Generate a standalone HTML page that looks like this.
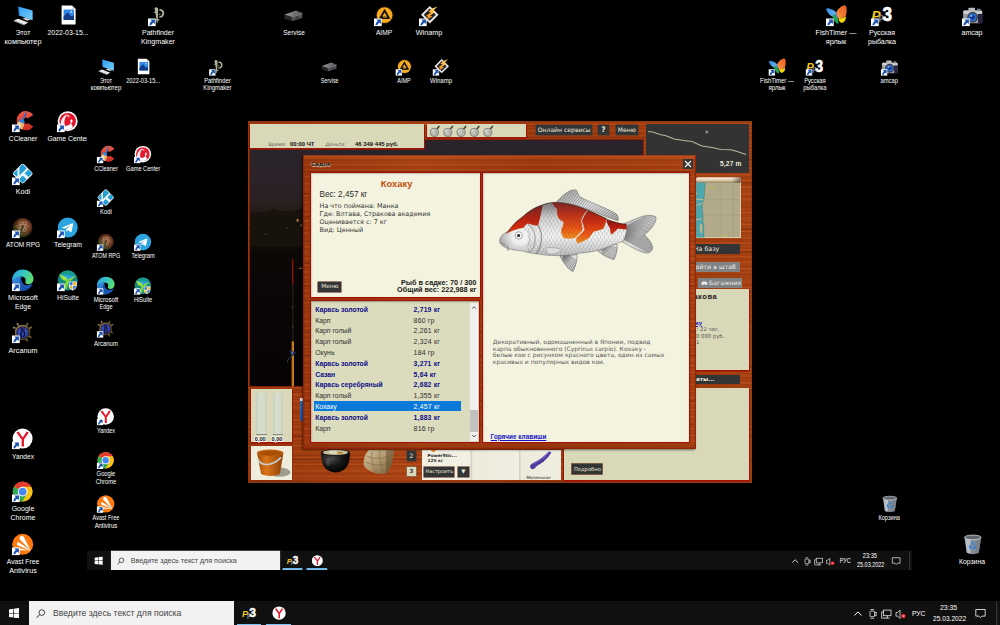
<!DOCTYPE html>
<html lang="ru"><head><meta charset="utf-8"><title>Desktop</title>
<style>
html,body{margin:0;padding:0;background:#000;}
body{width:1000px;height:625px;position:relative;overflow:hidden;font-family:"Liberation Sans",sans-serif;}
.desk{position:absolute;left:0;top:0;width:1000px;height:625px;background:#000;overflow:hidden;}
.inner{position:absolute;left:87.3px;top:54px;width:825px;height:516px;background:#000;overflow:hidden;}
.inner .desk{transform:scale(0.8253,0.8265);transform-origin:0 0;}
.ic{position:absolute;overflow:visible;}
.lb{position:absolute;width:80px;text-align:center;color:#fff;font-size:7.8px;line-height:8.75px;white-space:nowrap;}
.lb span{display:block;transform:scaleX(0.9);transform-origin:50% 50%;}
.tb{position:absolute;left:0;top:600.5px;width:1000px;height:24.5px;background:#101010;}
.win{position:absolute;left:9px;top:7.6px;}
.sb{position:absolute;left:29px;top:0.8px;width:204.6px;height:23.7px;background:#f2f2f2;}
.mg{position:absolute;left:7.2px;top:7.6px;}
.st{position:absolute;left:24px;top:7.1px;font-size:9.2px;line-height:11px;color:#454545;white-space:nowrap;transform:scaleX(0.94);transform-origin:0 50%;}
.tpp{position:absolute;left:241.8px;top:5.4px;}
.tya{position:absolute;left:271.6px;top:5.8px;}
.ul{position:absolute;top:23.2px;height:1.3px;background:#7cc3f5;}
.tray{position:absolute;left:850px;top:0;}
.lang,.tm,.dt{position:absolute;color:#fff;font-size:7.8px;line-height:8px;white-space:nowrap;transform-origin:0 50%;}
.lang{left:912px;top:9px;transform:scaleX(0.86);}
.tm{left:940.4px;top:3.6px;transform:scaleX(0.88);}
.dt{left:932.8px;top:14px;transform:scaleX(0.85);}
/* ---------- game ---------- */
.g{position:absolute;left:0;top:0;width:1000px;height:625px;pointer-events:none;}
.g *{position:absolute;box-sizing:border-box;}
.wood{background-color:#a93e0f;background-image:repeating-linear-gradient(180deg,rgba(70,15,0,0.0) 0px,rgba(70,15,0,0.15) 0.9px,rgba(70,15,0,0.0) 1.9px,rgba(255,140,60,0.10) 3px,rgba(70,15,0,0.0) 4.1px,rgba(60,10,0,0.12) 5.1px,rgba(90,30,5,0) 6.3px),repeating-linear-gradient(180deg,rgba(60,10,0,0) 0px,rgba(60,10,0,.10) 1.3px,rgba(60,10,0,0) 2.4px,rgba(255,150,70,.07) 3.7px),repeating-linear-gradient(180deg,rgba(40,5,0,0) 0px,rgba(40,5,0,0) 15px,rgba(40,5,0,.28) 16px,rgba(40,5,0,0) 17.4px,rgba(40,5,0,0) 23px),linear-gradient(90deg,rgba(0,0,0,.06),rgba(255,170,90,.08) 30%,rgba(0,0,0,.04) 60%,rgba(255,170,90,.06));}
.pn{background:#d9d8b9;box-shadow:0 1.7px 0 #a01607,1px 0.8px 0 #981407,-0.8px 0.8px 0 #8f1207,0 -0.5px 0 #9a3010;}
.pl{background:#f3f3e0;box-shadow:0 0 0 1.2px #a01008, inset 0.5px 0.8px 1.4px rgba(60,60,40,.35);}
.gt{font-family:"DejaVu Sans","Liberation Sans",sans-serif;white-space:nowrap;color:#333;}
.ls{font-family:"Liberation Sans",sans-serif;white-space:nowrap;}
.btn{background:#333435;color:#efeadb;text-align:center;white-space:nowrap;font-family:"DejaVu Sans",sans-serif;box-shadow:0 0 0 0.6px #5a3a2a;}
.btg{background:#808284;color:#f2f2ee;text-align:center;white-space:nowrap;font-family:"DejaVu Sans",sans-serif;}
.row{left:313.6px;width:147.8px;height:10.8px;font-family:"Liberation Sans",sans-serif;font-size:6.9px;line-height:10.8px;color:#2e2e2e;white-space:nowrap;}
.row b{font-weight:700;color:#0d0d86;font-size:6.8px}
.row i{font-style:normal;left:1.6px;top:1.4px}
.row u{text-decoration:none;left:100px;top:1.4px;letter-spacing:0.2px}
.row.sel{background:#0b79d9;color:#fff;}
.inner .ul{top:21.9px;height:2.6px;}

</style></head><body>
<div class="desk" id="d1">
<svg class="ic" style="left:12.00px;top:4.90px" width="21" height="21" viewBox="0 0 21 21"><defs><linearGradient id="pcga0" x1="0" y1="0" x2="1" y2="1"><stop offset="0" stop-color="#2f9bf0"/><stop offset="1" stop-color="#7ad0ff"/></linearGradient></defs>
<polygon points="6.3,1.6 20.6,5.6 20.6,15.2 7,10.6" fill="url(#pcga0)"/>
<polygon points="6.3,1.6 7,1.4 7.6,10.4 7,10.6" fill="#1c6fc0"/>
<polygon points="10.3,13.6 13.6,12.7 18.6,14.6 15.4,15.7" fill="#cfd3d6"/>
<polygon points="1.8,15.6 6.2,13.8 16.2,17.6 12.4,19.8" fill="#e9ebec"/>
<polygon points="1.8,15.6 12.4,19.8 12.4,20.4 1.8,16.2" fill="#aeb2b5"/></svg>
<div class="lb" style="left:-17.50px;top:29.10px"><span style="transform:scaleX(0.862)">Этот</span><span style="transform:scaleX(0.941)">компьютер</span></div>
<svg class="ic" style="left:57.22px;top:4.90px" width="21" height="21" viewBox="0 0 21 21"><path d="M4.6,0.6 H15 L18.6,4 V19.6 H4.6 Z" fill="#ffffff"/><path d="M15,0.6 V4 H18.6 Z" fill="#d4d8dc"/>
<rect x="6.6" y="4.6" width="10.4" height="10.4" fill="#2f86e6"/><polygon points="6.6,15 6.6,11.5 10.5,7.5 14.5,11.6 17,10 17,15" fill="#123d86"/><circle cx="14.4" cy="6.8" r="1" fill="#cfe6ff"/></svg>
<div class="lb" style="left:27.72px;top:29.10px"><span style="transform:scaleX(0.884)">2022-03-15...</span></div>
<svg class="ic" style="left:147.66px;top:4.90px" width="21" height="21" viewBox="0 0 21 21"><g fill="#b3b397"><path d="M8.2,2 L10.2,3.6 L10,9 L9.8,14 L11.4,14.4 L11.4,15.4 L9.8,15.4 L9.8,17.8 L8.6,17.8 L8.6,15.4 L7.6,15.2 L7.8,14.2 L8.4,14 L7.4,8 L5.6,7.6 L7.2,6.6 L6.4,3.6Z"/><path d="M11.2,4.4 C14.4,3.4 16.6,6 16.2,8.8 C15.8,11.4 13.8,13 11.4,12.8 L11.2,11.2 C13,11.4 14.2,10.4 14.4,8.6 C14.6,6.8 13.4,5.6 11.6,6Z"/><path d="M11.4,8.4 C12.4,8.2 12.8,9.4 12,10.2 L11.2,10Z"/></g><rect x="0" y="13.5" width="7.7" height="7.6" fill="#ffffff"/><path d="M2.3,14.5 L6.9,14.5 L6.9,19.1 L5.45,17.65 C4.4,18 3.5,19 3.2,20.3 L1.4,20.3 C1.6,18.2 2.6,16.9 3.8,16Z" fill="#1b52b4"/></svg>
<div class="lb" style="left:118.16px;top:29.10px"><span style="transform:scaleX(0.9)">Pathfinder</span><span style="transform:scaleX(0.912)">Kingmaker</span></div>
<svg class="ic" style="left:283.32px;top:4.90px" width="21" height="21" viewBox="0 0 21 21"><defs><linearGradient id="svta3" x1="0" y1="0" x2="1" y2="0"><stop offset="0" stop-color="#949494"/><stop offset="1" stop-color="#5a5a5a"/></linearGradient></defs><polygon points="1.5,9.5 8.7,11.9 8.7,16.2 1.5,13.8" fill="#262626"/><polygon points="8.7,11.9 19.3,8.1 19.3,12.9 8.7,16.2" fill="#4c4f54"/><polygon points="13.4,10.4 15.4,9.7 15.4,14 13.4,14.7" fill="#3a3c40"/><polygon points="1.5,9.5 13,5.4 19.3,8.1 8.7,11.9" fill="url(#svta3)"/><polygon points="8.7,11.9 19.3,8.1 19.3,8.9 8.7,12.7" fill="#8a8c90"/></svg>
<div class="lb" style="left:253.82px;top:29.10px"><span style="transform:scaleX(0.83)">Servise</span></div>
<svg class="ic" style="left:373.76px;top:4.90px" width="21" height="21" viewBox="0 0 21 21"><circle cx="10.6" cy="10.2" r="9.3" fill="#15100a"/><circle cx="10.6" cy="10.2" r="7.9" fill="#f9ab1c"/><path d="M10.6,3.8 L16.4,13.8 H4.8 Z M10.6,7.4 L8,11.8 H13.2 Z" fill="#111" fill-rule="evenodd"/><path d="M6.4,14 L9,10.8 L15.4,14Z" fill="#111"/><path d="M8.4,12.2 L9.4,11.2 L13.4,13Z" fill="#f9ab1c"/><rect x="0" y="13.5" width="7.7" height="7.6" fill="#ffffff"/><path d="M2.3,14.5 L6.9,14.5 L6.9,19.1 L5.45,17.65 C4.4,18 3.5,19 3.2,20.3 L1.4,20.3 C1.6,18.2 2.6,16.9 3.8,16Z" fill="#1b52b4"/></svg>
<div class="lb" style="left:344.26px;top:29.10px"><span style="transform:scaleX(0.85)">AIMP</span></div>
<svg class="ic" style="left:418.98px;top:4.90px" width="21" height="21" viewBox="0 0 21 21"><defs><linearGradient id="waba5" x1="0" y1="1" x2="1" y2="0"><stop offset="0" stop-color="#f07a10"/><stop offset=".5" stop-color="#ffb22e"/><stop offset="1" stop-color="#ffd870"/></linearGradient></defs><polygon points="10.8,1 19.6,9.7 10.8,18.4 2,9.7" fill="#e9e9ea"/><polygon points="10.8,3.6 16.9,9.7 10.8,15.8 4.7,9.7" fill="#23232a"/><polygon points="18.6,1.4 13.8,6 16.4,6.8 11,10.8 13.6,11.6 5.4,15.6 9.4,11.8 6.8,11 12,7.4 9.2,6.8 13.6,3.2" fill="url(#waba5)"/><rect x="0" y="13.5" width="7.7" height="7.6" fill="#ffffff"/><path d="M2.3,14.5 L6.9,14.5 L6.9,19.1 L5.45,17.65 C4.4,18 3.5,19 3.2,20.3 L1.4,20.3 C1.6,18.2 2.6,16.9 3.8,16Z" fill="#1b52b4"/></svg>
<div class="lb" style="left:389.48px;top:29.10px"><span style="transform:scaleX(0.93)">Winamp</span></div>
<svg class="ic" style="left:825.96px;top:4.90px" width="21" height="21" viewBox="0 0 21 21"><defs><linearGradient id="bfoa6" x1="1" y1="0" x2="0" y2="1"><stop offset="0" stop-color="#ee5a26"/><stop offset=".55" stop-color="#f07a30"/><stop offset="1" stop-color="#f4a848"/></linearGradient><linearGradient id="bfba6" x1="0" y1="0" x2="1" y2="1"><stop offset="0" stop-color="#2f8fe6"/><stop offset="1" stop-color="#7ab8f0"/></linearGradient></defs><path d="M0.2,4.2 C0.4,3.4 1.6,3.2 3,3.4 C6.4,4 8.8,5.6 10.4,7.8 L10.6,12 C8.8,12.6 6.8,12 5.4,11 C3,9.4 1,7 0.2,4.2Z" fill="url(#bfba6)"/><path d="M10.2,7.6 C11.6,4.4 14.4,1.4 17.8,0.4 C19.2,0 20,0.8 20.4,2.4 C21,5.4 20.6,8.6 19.6,11 C17.6,13 14.6,13.8 12.4,13.4 C11,11.8 10.4,9.8 10.2,7.6Z" fill="url(#bfoa6)"/><path d="M12.6,13.2 C15,13.6 17.8,12.8 19.8,11.2 C20,13.2 19.6,15.2 18.4,16.4 C17.2,17.6 15.6,18 14.6,17.4 C13.4,16.6 12.6,15 12.6,13.2Z" fill="#f6d20e"/><path d="M7,9.6 C8.6,9.4 10,10 11,11.4 C12.2,13.4 12.8,16 12.4,18.2 C12.2,18.8 11.6,18.8 11,18.4 C9,17 7.6,14.8 7,12.4 C6.8,11.4 6.8,10.4 7,9.6Z" fill="#1ea654"/><path d="M9.8,7.8 C11,9.4 11.8,11.4 12.2,13.4 C11.4,12.6 10.4,11.6 9.6,10.4 C9.4,9.6 9.6,8.6 9.8,7.8Z" fill="#6e72d8"/><rect x="0" y="13.5" width="7.7" height="7.6" fill="#ffffff"/><path d="M2.3,14.5 L6.9,14.5 L6.9,19.1 L5.45,17.65 C4.4,18 3.5,19 3.2,20.3 L1.4,20.3 C1.6,18.2 2.6,16.9 3.8,16Z" fill="#1b52b4"/></svg>
<div class="lb" style="left:796.46px;top:29.10px"><span style="transform:scaleX(0.925)">FishTimer —</span><span style="transform:scaleX(0.94)">ярлык</span></div>
<svg class="ic" style="left:871.18px;top:4.90px" width="21" height="21" viewBox="0 0 21 21"><text x="0.4" y="15.4" font-family="Liberation Sans, sans-serif" font-style="italic" font-weight="bold" font-size="13.6" fill="#f2c81c" transform="translate(0,0)">P</text><text x="7.6" y="15.4" font-family="Liberation Sans, sans-serif" font-weight="bold" font-size="8.6" fill="#8c8c8c">p</text><text transform="translate(11.4,16.2) scale(0.88,1)" x="0" y="0" font-family="Liberation Sans, sans-serif" font-weight="bold" font-size="19.4" fill="#ffffff" stroke="#ffffff" stroke-width="0.7">3</text><rect x="0" y="13.5" width="7.7" height="7.6" fill="#ffffff"/><path d="M2.3,14.5 L6.9,14.5 L6.9,19.1 L5.45,17.65 C4.4,18 3.5,19 3.2,20.3 L1.4,20.3 C1.6,18.2 2.6,16.9 3.8,16Z" fill="#1b52b4"/></svg>
<div class="lb" style="left:841.68px;top:29.10px"><span style="transform:scaleX(0.898)">Русская</span><span style="transform:scaleX(0.902)">рыбалка</span></div>
<svg class="ic" style="left:961.62px;top:4.90px" width="21" height="21" viewBox="0 0 21 21"><rect x="1.2" y="5.6" width="19" height="12.6" rx="1.6" fill="#9a9da2"/><rect x="1.2" y="5.6" width="19" height="3.4" rx="1.4" fill="#c9ccd0"/><rect x="6.4" y="2.8" width="6.6" height="3.6" rx="0.8" fill="#b8bbbf"/><rect x="15" y="3.8" width="3.6" height="2.2" fill="#7d8085"/><rect x="16" y="9" width="4.4" height="9.2" fill="#2a2340"/><circle cx="10.6" cy="12.2" r="5.4" fill="#3c3f46"/><circle cx="10.6" cy="12.2" r="4" fill="#2c6fd0"/><circle cx="10.6" cy="12.2" r="2.2" fill="#123a86"/><circle cx="9.4" cy="10.8" r="0.9" fill="#a8d0ff"/><rect x="0" y="13.5" width="7.7" height="7.6" fill="#ffffff"/><path d="M2.3,14.5 L6.9,14.5 L6.9,19.1 L5.45,17.65 C4.4,18 3.5,19 3.2,20.3 L1.4,20.3 C1.6,18.2 2.6,16.9 3.8,16Z" fill="#1b52b4"/></svg>
<div class="lb" style="left:932.12px;top:29.10px"><span style="transform:scaleX(0.897)">amcap</span></div>
<svg class="ic" style="left:12.00px;top:110.76px" width="21" height="21" viewBox="0 0 21 21"><defs><linearGradient id="ccga9" x1="0" y1="0" x2="0" y2="1"><stop offset="0" stop-color="#ee5a44"/><stop offset="1" stop-color="#cc2a1e"/></linearGradient></defs><path d="M21.2,4 A9.2,9.6 0 1 0 21.2,15.4 L16,12.2 A3,3 0 1 1 16,7.2 Z" fill="url(#ccga9)"/><path d="M13.4,1.2 L14.8,1.8 L11.6,9 L10.2,8.4Z" fill="#1d72d4"/><path d="M7.6,8.6 C9.4,7.6 12.2,8.8 12.8,10.8 L11.6,12.8 L6.6,10.4Z" fill="#2a84e4"/><path d="M6.6,10.4 L11.8,12.8 C12,14.6 11,17 10,18.4 C8.4,17.8 6.8,16.4 5.4,15 C4.6,13.6 5.2,11.6 6.6,10.4Z" fill="#f2cf98"/><path d="M9,11.6 L11.8,12.8 C12,14.6 11,17 10,18.4 C9.4,18.2 8.8,17.8 8.2,17.4 C9.2,15.6 9.4,13.4 9,11.6Z" fill="#e4b06a"/><rect x="0" y="13.5" width="7.7" height="7.6" fill="#ffffff"/><path d="M2.3,14.5 L6.9,14.5 L6.9,19.1 L5.45,17.65 C4.4,18 3.5,19 3.2,20.3 L1.4,20.3 C1.6,18.2 2.6,16.9 3.8,16Z" fill="#1b52b4"/></svg>
<div class="lb" style="left:-17.50px;top:134.96px"><span style="transform:scaleX(0.865)">CCleaner</span></div>
<svg class="ic" style="left:57.22px;top:110.76px" width="21" height="21" viewBox="0 0 21 21"><circle cx="10.7" cy="10.2" r="10" fill="#ffffff"/><circle cx="10.7" cy="10.2" r="8.3" fill="#e3162c"/><path d="M3.6,13.4 C3.6,8.4 6.4,4.6 10.8,3 C8.6,5.4 7.4,8.4 7.4,11.4 C7.4,13 7.8,14.2 8.4,15.2 L5.4,16 C4.4,15.2 3.8,14.4 3.6,13.4Z" fill="#fff" opacity=".92"/><path d="M8,15.2 L12.4,13.8 L13.6,12 L14.6,13.4 L16,16 C13.6,18.8 8.6,19.6 5.4,16.4Z" fill="#fff"/><path d="M10.4,4 L12.6,4.8 L12.2,6.4 L11.4,5.6 L10.6,6.2Z" fill="#fff"/><path d="M14.4,8 L16.2,10.6 L15,10.6 L14.6,12.6 L13.4,12.2 L13.8,10.4 L12.8,10.2Z" fill="#fff"/><rect x="0" y="13.5" width="7.7" height="7.6" fill="#ffffff"/><path d="M2.3,14.5 L6.9,14.5 L6.9,19.1 L5.45,17.65 C4.4,18 3.5,19 3.2,20.3 L1.4,20.3 C1.6,18.2 2.6,16.9 3.8,16Z" fill="#1b52b4"/></svg>
<div class="lb" style="left:27.72px;top:134.96px"><span style="transform:scaleX(0.88)">Game Center</span></div>
<svg class="ic" style="left:12.00px;top:163.69px" width="21" height="21" viewBox="0 0 21 21"><g transform="translate(10.7,9.6) scale(1.04) translate(-10.7,-10.2)"><g transform="rotate(45 10.7 10.2)"><rect x="3.5" y="3" width="14.4" height="14.4" rx="1.8" fill="#f4f8fb"/></g><g fill="#219fd6"><polygon points="1.6,10.1 5.7,6 5.7,13.4"/><polygon points="10.5,1 14.6,5.1 7.5,12.2 7.5,4"/><polygon points="16.2,6.2 19.8,9.8 16.2,13.4 12.6,9.8"/><polygon points="10.8,12 14.4,15.6 10.6,19.4 7.4,16.2 7.4,15.4"/></g></g><rect x="0" y="13.5" width="7.7" height="7.6" fill="#ffffff"/><path d="M2.3,14.5 L6.9,14.5 L6.9,19.1 L5.45,17.65 C4.4,18 3.5,19 3.2,20.3 L1.4,20.3 C1.6,18.2 2.6,16.9 3.8,16Z" fill="#1b52b4"/></svg>
<div class="lb" style="left:-17.50px;top:187.89px"><span style="transform:scaleX(0.92)">Kodi</span></div>
<svg class="ic" style="left:12.00px;top:216.62px" width="21" height="21" viewBox="0 0 21 21"><defs><linearGradient id="atga12" x1="0.9" y1="0" x2="0.1" y2="1"><stop offset="0" stop-color="#a0583a"/><stop offset="0.45" stop-color="#6e3a24"/><stop offset="0.75" stop-color="#4a4a1e"/><stop offset="1" stop-color="#26300e"/></linearGradient><radialGradient id="atsa12" cx=".5" cy=".5" r=".5"><stop offset=".7" stop-color="#000" stop-opacity="0"/><stop offset="1" stop-color="#000" stop-opacity=".55"/></radialGradient></defs><circle cx="10.6" cy="10.6" r="9.7" fill="url(#atga12)"/><g fill="none" stroke="#b89a78" stroke-width="1" opacity=".75"><ellipse cx="10.8" cy="9.6" rx="5.2" ry="2.1"/><ellipse cx="10.8" cy="9.6" rx="5.2" ry="2.1" transform="rotate(60 10.8 9.6)"/><ellipse cx="10.8" cy="9.6" rx="5.2" ry="2.1" transform="rotate(120 10.8 9.6)"/></g><path d="M8.6,12.4 C9.6,10.4 10.6,9.4 11.6,8.4 C11.4,10.4 10.8,13 9.6,15.4Z" fill="#2a3a14" opacity=".8"/><circle cx="10.6" cy="10.6" r="9.7" fill="url(#atsa12)"/><rect x="0" y="13.5" width="7.7" height="7.6" fill="#ffffff"/><path d="M2.3,14.5 L6.9,14.5 L6.9,19.1 L5.45,17.65 C4.4,18 3.5,19 3.2,20.3 L1.4,20.3 C1.6,18.2 2.6,16.9 3.8,16Z" fill="#1b52b4"/></svg>
<div class="lb" style="left:-17.50px;top:240.82px"><span style="transform:scaleX(0.835)">ATOM RPG</span></div>
<svg class="ic" style="left:57.22px;top:216.62px" width="21" height="21" viewBox="0 0 21 21"><circle cx="10.8" cy="10.6" r="10" fill="#2aa3df"/><g transform="translate(10.6,10.4) scale(.86) translate(-10.6,-10.4)"><path d="M4.4,10.4 L16.2,5.6 C16.8,5.4 17.2,5.8 17,6.6 L15.2,15.4 C15,16 14.6,16.2 14,15.8 L11,13.6 L9.4,15.2 C9.2,15.4 8.9,15.3 8.9,15 L9.1,12.4 L14.4,7.6 L7.8,11.8 L4.6,11 C4.1,10.9 4,10.6 4.4,10.4Z" fill="#fff"/></g><rect x="0" y="13.5" width="7.7" height="7.6" fill="#ffffff"/><path d="M2.3,14.5 L6.9,14.5 L6.9,19.1 L5.45,17.65 C4.4,18 3.5,19 3.2,20.3 L1.4,20.3 C1.6,18.2 2.6,16.9 3.8,16Z" fill="#1b52b4"/></svg>
<div class="lb" style="left:27.72px;top:240.82px"><span style="transform:scaleX(0.873)">Telegram</span></div>
<svg class="ic" style="left:12.00px;top:269.55px" width="21" height="21" viewBox="0 0 21 21"><defs><linearGradient id="edga14" x1="0" y1="0.2" x2="1" y2="0.6"><stop offset="0" stop-color="#2c9fe8"/><stop offset="0.45" stop-color="#35c4c4"/><stop offset="1" stop-color="#5fe06a"/></linearGradient><linearGradient id="edba14" x1="0" y1="0" x2="0.6" y2="1"><stop offset="0" stop-color="#3a9ae8"/><stop offset="1" stop-color="#1650b0"/></linearGradient></defs><g transform="translate(10.7,10.2) scale(1.09) translate(-10.7,-10.7)">
<path d="M1,11.6 C0.4,5 5.2,0.8 10.8,0.8 C16.6,0.8 20.6,4.8 20.6,9.6 C20.6,12.6 18.4,14.4 16,14.4 C13.6,14.4 12.6,13.2 13.2,12 C14,10.4 13.2,7.6 9.8,7.4 C5.6,7.2 2.2,10 1,11.6Z" fill="url(#edga14)"/>
<path d="M1,11.6 C1.2,16.8 5.4,20.6 10.4,20.6 C13,20.6 15.6,19.6 17.4,17.6 C14,19 9.6,17.8 8.4,14.2 C7.6,11.6 8.6,9 9.8,7.4 C5.4,7.2 2,9.8 1,11.6Z" fill="url(#edba14)"/>
<path d="M8.4,14.2 C9.6,17.8 14,19 17.4,17.6 C18.6,16.4 19.4,15 19.8,13.6 C17,16 12.4,16.2 10.4,13 C9.2,11 9.2,9 9.8,7.4 C8.6,9 7.6,11.6 8.4,14.2Z" fill="#1a5cbc"/></g><rect x="0" y="13.5" width="7.7" height="7.6" fill="#ffffff"/><path d="M2.3,14.5 L6.9,14.5 L6.9,19.1 L5.45,17.65 C4.4,18 3.5,19 3.2,20.3 L1.4,20.3 C1.6,18.2 2.6,16.9 3.8,16Z" fill="#1b52b4"/></svg>
<div class="lb" style="left:-17.50px;top:293.75px"><span style="transform:scaleX(0.94)">Microsoft</span><span style="transform:scaleX(0.87)">Edge</span></div>
<svg class="ic" style="left:57.22px;top:269.55px" width="21" height="21" viewBox="0 0 21 21"><circle cx="10.7" cy="10.6" r="10" fill="#14897e"/><path d="M3,4 A10,10 0 0 1 18.6,4.4 L10.6,10.6Z" fill="#1a9a8c"/><polygon points="3.4,4.6 19,6 10.8,10.6" fill="#27a4e6"/><polygon points="2,4 9.4,7.4 11.2,10.8 6.6,10.4" fill="#a6e83a"/><polygon points="2,4 6.6,10.4 4.6,8.6" fill="#c8f45a"/><polygon points="19.6,5.6 13.6,10.8 10.4,10.8 12.6,8.4" fill="#8fdc34"/><polygon points="8.6,9.6 12.2,10.6 9.6,19.8 7.2,17.4" fill="#7ad830"/><polygon points="8.6,10 7.2,17.4 3.8,17.2 6.6,13.2" fill="#0f6f68"/><path d="M11.8,11.4 H19.8 V15.4 C19.8,18 17.8,19.6 15.8,20.4 C13.8,19.6 11.8,18 11.8,15.4Z" fill="#ffffff"/><rect x="12.5" y="12.1" width="3" height="3.2" fill="#2a7ae0"/><rect x="16.1" y="12.1" width="3" height="3.2" fill="#f5b21c"/><path d="M12.5,15.9 H15.5 V19.5 C13.9,18.8 12.5,17.6 12.5,16Z" fill="#f5b21c"/><path d="M16.1,15.9 H19.1 V16 C19.1,17.6 17.7,18.8 16.1,19.5Z" fill="#2a7ae0"/><rect x="0" y="13.5" width="7.7" height="7.6" fill="#ffffff"/><path d="M2.3,14.5 L6.9,14.5 L6.9,19.1 L5.45,17.65 C4.4,18 3.5,19 3.2,20.3 L1.4,20.3 C1.6,18.2 2.6,16.9 3.8,16Z" fill="#1b52b4"/></svg>
<div class="lb" style="left:27.72px;top:293.75px"><span style="transform:scaleX(0.871)">HiSuite</span></div>
<svg class="ic" style="left:12.00px;top:322.48px" width="21" height="21" viewBox="0 0 21 21"><defs><linearGradient id="arga16" x1="0" y1="0" x2="1" y2="1"><stop offset="0" stop-color="#9a845a"/><stop offset=".5" stop-color="#6a5636"/><stop offset="1" stop-color="#2a2010"/></linearGradient></defs><g stroke="url(#arga16)" stroke-width="2" stroke-linecap="round"><line x1="18.00" y1="10.60" x2="20.60" y2="10.60"/><line x1="17.01" y1="14.30" x2="19.26" y2="15.60"/><line x1="14.30" y1="17.01" x2="15.60" y2="19.26"/><line x1="10.60" y1="18.00" x2="10.60" y2="20.60"/><line x1="6.90" y1="17.01" x2="5.60" y2="19.26"/><line x1="4.19" y1="14.30" x2="1.94" y2="15.60"/><line x1="3.20" y1="10.60" x2="0.60" y2="10.60"/><line x1="4.19" y1="6.90" x2="1.94" y2="5.60"/><line x1="6.90" y1="4.19" x2="5.60" y2="1.94"/><line x1="10.60" y1="3.20" x2="10.60" y2="0.60"/><line x1="14.30" y1="4.19" x2="15.60" y2="1.94"/><line x1="17.01" y1="6.90" x2="19.26" y2="5.60"/></g><circle cx="10.6" cy="10.6" r="7.8" fill="url(#arga16)"/><circle cx="10.6" cy="10.6" r="6.2" fill="#161428"/><circle cx="10.6" cy="10.6" r="5.4" fill="#3448bc"/><circle cx="12" cy="8.4" r="2" fill="#5a6ae0" opacity=".7"/><path d="M9.2,6 C10.6,7.6 10.4,9.6 9.4,10.8 C8.6,12 9,14 10,15.4 M12.2,6.4 C11.4,8 11.8,9.6 12.4,11 C13,12.4 12.4,14 11.6,15.2" fill="none" stroke="#10102c" stroke-width="1.5"/><rect x="0" y="13.5" width="7.7" height="7.6" fill="#ffffff"/><path d="M2.3,14.5 L6.9,14.5 L6.9,19.1 L5.45,17.65 C4.4,18 3.5,19 3.2,20.3 L1.4,20.3 C1.6,18.2 2.6,16.9 3.8,16Z" fill="#1b52b4"/></svg>
<div class="lb" style="left:-17.50px;top:346.68px"><span style="transform:scaleX(0.925)">Arcanum</span></div>
<svg class="ic" style="left:12.00px;top:428.34px" width="21" height="21" viewBox="0 0 21 21"><circle cx="10.6" cy="10.6" r="10" fill="#ffffff"/><path d="M4.4,4.4 L6.6,3.4 L10.8,9.4 L14.6,3.4 L16.8,4.4 L12,11.6 L12,18.4 L9.6,18.4 L9.6,11.6Z" fill="#e8192c"/><rect x="0" y="13.5" width="7.7" height="7.6" fill="#ffffff"/><path d="M2.3,14.5 L6.9,14.5 L6.9,19.1 L5.45,17.65 C4.4,18 3.5,19 3.2,20.3 L1.4,20.3 C1.6,18.2 2.6,16.9 3.8,16Z" fill="#1b52b4"/></svg>
<div class="lb" style="left:-17.50px;top:452.54px"><span style="transform:scaleX(0.845)">Yandex</span></div>
<svg class="ic" style="left:12.00px;top:481.27px" width="21" height="21" viewBox="0 0 21 21"><circle cx="10.6" cy="10.6" r="9.8" fill="#fbc116"/><path d="M10.6,10.6 L2.1,5.7 A9.8,9.8 0 0 1 19.1,5.7 Z" fill="#e33b2e"/><path d="M10.6,0.8 A9.8,9.8 0 0 1 19.1,5.7 L10.6,5.7Z" fill="#e33b2e"/><path d="M10.6,10.6 L2.1,5.7 A9.8,9.8 0 0 0 10.6,20.4 L14.9,13.1Z" fill="#2da94f"/><path d="M19.1,5.7 A9.8,9.8 0 0 1 10.6,20.4 L14.9,13.1 Z" fill="#fbc116"/><path d="M10.6,5.7 L19.1,5.7 L14.9,13.1Z" fill="#fbc116"/><circle cx="10.6" cy="10.6" r="4.9" fill="#ffffff"/><circle cx="10.6" cy="10.6" r="3.9" fill="#4688f1"/><rect x="0" y="13.5" width="7.7" height="7.6" fill="#ffffff"/><path d="M2.3,14.5 L6.9,14.5 L6.9,19.1 L5.45,17.65 C4.4,18 3.5,19 3.2,20.3 L1.4,20.3 C1.6,18.2 2.6,16.9 3.8,16Z" fill="#1b52b4"/></svg>
<div class="lb" style="left:-17.50px;top:505.47px"><span style="transform:scaleX(0.902)">Google</span><span style="transform:scaleX(0.898)">Chrome</span></div>
<svg class="ic" style="left:12.00px;top:534.20px" width="21" height="21" viewBox="0 0 21 21"><circle cx="10.7" cy="10.3" r="10.5" fill="#ff7a0e"/><path d="M18.8,16.6 L11.76,2.95 A2.3,2.3 0 1 0 8.04,5.65Z M18.8,16.6 L7.26,8.59 A1.6,1.6 0 1 0 5.74,11.41Z M18.8,16.6 L3.74,13.61 A1.2,1.2 0 1 0 3.46,15.99Z" fill="#fff"/><rect x="0" y="13.5" width="7.7" height="7.6" fill="#ffffff"/><path d="M2.3,14.5 L6.9,14.5 L6.9,19.1 L5.45,17.65 C4.4,18 3.5,19 3.2,20.3 L1.4,20.3 C1.6,18.2 2.6,16.9 3.8,16Z" fill="#1b52b4"/></svg>
<div class="lb" style="left:-17.50px;top:558.40px"><span style="transform:scaleX(0.865)">Avast Free</span><span style="transform:scaleX(0.92)">Antivirus</span></div>
<svg class="ic" style="left:961.62px;top:534.20px" width="21" height="21" viewBox="0 0 21 21"><path d="M2.4,3.4 L19.2,3.4 L16.8,18.8 C13,20.6 8.6,20.6 4.8,18.8Z" fill="#9097a0" opacity="0.92"/><path d="M3.2,4.6 L8.6,5.6 L8.4,19.6 C7,19.4 5.8,19.2 4.8,18.8Z" fill="#c9cfd6" opacity="0.75"/><path d="M13.6,5.6 L18.8,4.6 L16.8,18.8 C15.8,19.2 14.8,19.4 13.6,19.6Z" fill="#777e87" opacity="0.8"/><ellipse cx="10.8" cy="3.4" rx="8.4" ry="2.3" fill="#5f666e" stroke="#cfd4d9" stroke-width="0.8"/><g fill="#1f86ee"><path d="M9.6,8.6 L11.6,8.2 L13,10.6 L11.8,11.2 L10.8,9.6 L9.8,10.2Z"/><path d="M13.4,11.4 L14.2,13.4 L12.4,15 L10.8,15 L10.8,13.6 L12.2,13.6 L12.4,12.4Z"/><path d="M9.6,15 L7.6,14.6 L7,12.4 L8.2,10.6 L9.2,11.4 L8.4,12.6 L9.4,13.4Z"/></g></svg>
<div class="lb" style="left:932.12px;top:558.40px"><span style="transform:scaleX(0.875)">Корзина</span></div>
<div class="tb">
<svg class="win" viewBox="0 0 10 10" width="10.4" height="10.4"><path d="M0,1.4 L4.2,0.8 V4.7 H0Z M4.8,0.7 L10,0 V4.7 H4.8Z M0,5.3 H4.2 V9.2 L0,8.6Z M4.8,5.3 H10 V10 L4.8,9.3Z" fill="#fff"/></svg>
<div class="sb"><svg class="mg" viewBox="0 0 10 10" width="9.4" height="9.4"><circle cx="6.2" cy="3.8" r="3" fill="none" stroke="#222" stroke-width="0.9"/><path d="M4,6 L0.6,9.4" stroke="#222" stroke-width="1"/></svg><span class="st">Введите здесь текст для поиска</span></div>
<svg class="tpp" width="16" height="14" viewBox="0 0 16 14"><text x="0" y="10.8" font-family="Liberation Sans, sans-serif" font-style="italic" font-weight="bold" font-size="9.4" fill="#f2c81c">P</text><text x="5" y="11" font-family="Liberation Sans, sans-serif" font-weight="bold" font-size="6.4" fill="#8a8a8a">p</text><text transform="translate(7.2,11.4) scale(.92,1)" x="0" y="0" font-family="Liberation Sans, sans-serif" font-weight="bold" font-size="13.2" fill="#ffffff" stroke="#ffffff" stroke-width="0.5">3</text></svg>
<svg class="tya" width="14" height="14" viewBox="0 0 21 21"><circle cx="10.6" cy="10.6" r="10" fill="#ffffff"/><path d="M4.4,4.4 L6.6,3.4 L10.8,9.4 L14.6,3.4 L16.8,4.4 L12,11.6 L12,18.4 L9.6,18.4 L9.6,11.6Z" fill="#e8192c"/></svg>
<div class="ul" style="left:237.2px;width:24px"></div><div class="ul" style="left:266.4px;width:24.2px"></div>
<svg class="tray" width="150" height="24.5" viewBox="850 600.5 150 24.5">
<path d="M854.4,615 L858,611.4 L861.6,615" fill="none" stroke="#fff" stroke-width="1"/>
<g fill="none" stroke="#e8e8e8" stroke-width="0.8"><rect x="870" y="610.6" width="4.6" height="5.6" rx="0.6"/><path d="M874.6,612.4 L876.2,611.6 V615.4 L874.6,614.6"/><path d="M870.6,609 H874 M870.6,617.8 H874"/></g>
<g fill="none" stroke="#e8e8e8" stroke-width="0.8"><rect x="883.6" y="609.6" width="7.4" height="5.6"/><path d="M881.6,611.4 H883.6 M881.6,611.4 V617.6 H886.6 M885.6,617.6 H889.6 M887.4,615.2 V617.4"/></g>
<g fill="none" stroke="#e8e8e8" stroke-width="0.8"><path d="M896,612 H897.6 L900,609.6 V618 L897.6,615.6 H896Z"/></g><circle cx="903.4" cy="615.6" r="2.3" fill="#e81123"/><path d="M902.4,614.6 L904.4,616.6 M904.4,614.6 L902.4,616.6" stroke="#fff" stroke-width="0.6"/>
<g fill="none" stroke="#f0f0f0" stroke-width="0.85"><path d="M975.8,609 H985.2 V615.6 H982 L980.5,617.2 L979,615.6 H975.8Z"/></g>
<rect x="996.6" y="601" width="0.5" height="24" fill="#6a6a6a"/>
</svg>
<span class="lang">РУС</span><span class="tm">23:35</span><span class="dt">25.03.2022</span>
</div>
</div>
<div class="inner"><div class="desk" id="d2">
<svg class="ic" style="left:12.00px;top:4.90px" width="21" height="21" viewBox="0 0 21 21"><defs><linearGradient id="pcgb0" x1="0" y1="0" x2="1" y2="1"><stop offset="0" stop-color="#2f9bf0"/><stop offset="1" stop-color="#7ad0ff"/></linearGradient></defs>
<polygon points="6.3,1.6 20.6,5.6 20.6,15.2 7,10.6" fill="url(#pcgb0)"/>
<polygon points="6.3,1.6 7,1.4 7.6,10.4 7,10.6" fill="#1c6fc0"/>
<polygon points="10.3,13.6 13.6,12.7 18.6,14.6 15.4,15.7" fill="#cfd3d6"/>
<polygon points="1.8,15.6 6.2,13.8 16.2,17.6 12.4,19.8" fill="#e9ebec"/>
<polygon points="1.8,15.6 12.4,19.8 12.4,20.4 1.8,16.2" fill="#aeb2b5"/></svg>
<div class="lb" style="left:-17.50px;top:29.10px"><span style="transform:scaleX(0.862)">Этот</span><span style="transform:scaleX(0.941)">компьютер</span></div>
<svg class="ic" style="left:57.22px;top:4.90px" width="21" height="21" viewBox="0 0 21 21"><path d="M4.6,0.6 H15 L18.6,4 V19.6 H4.6 Z" fill="#ffffff"/><path d="M15,0.6 V4 H18.6 Z" fill="#d4d8dc"/>
<rect x="6.6" y="4.6" width="10.4" height="10.4" fill="#2f86e6"/><polygon points="6.6,15 6.6,11.5 10.5,7.5 14.5,11.6 17,10 17,15" fill="#123d86"/><circle cx="14.4" cy="6.8" r="1" fill="#cfe6ff"/></svg>
<div class="lb" style="left:27.72px;top:29.10px"><span style="transform:scaleX(0.884)">2022-03-15...</span></div>
<svg class="ic" style="left:147.66px;top:4.90px" width="21" height="21" viewBox="0 0 21 21"><g fill="#b3b397"><path d="M8.2,2 L10.2,3.6 L10,9 L9.8,14 L11.4,14.4 L11.4,15.4 L9.8,15.4 L9.8,17.8 L8.6,17.8 L8.6,15.4 L7.6,15.2 L7.8,14.2 L8.4,14 L7.4,8 L5.6,7.6 L7.2,6.6 L6.4,3.6Z"/><path d="M11.2,4.4 C14.4,3.4 16.6,6 16.2,8.8 C15.8,11.4 13.8,13 11.4,12.8 L11.2,11.2 C13,11.4 14.2,10.4 14.4,8.6 C14.6,6.8 13.4,5.6 11.6,6Z"/><path d="M11.4,8.4 C12.4,8.2 12.8,9.4 12,10.2 L11.2,10Z"/></g><rect x="0" y="13.5" width="7.7" height="7.6" fill="#ffffff"/><path d="M2.3,14.5 L6.9,14.5 L6.9,19.1 L5.45,17.65 C4.4,18 3.5,19 3.2,20.3 L1.4,20.3 C1.6,18.2 2.6,16.9 3.8,16Z" fill="#1b52b4"/></svg>
<div class="lb" style="left:118.16px;top:29.10px"><span style="transform:scaleX(0.9)">Pathfinder</span><span style="transform:scaleX(0.912)">Kingmaker</span></div>
<svg class="ic" style="left:283.32px;top:4.90px" width="21" height="21" viewBox="0 0 21 21"><defs><linearGradient id="svtb3" x1="0" y1="0" x2="1" y2="0"><stop offset="0" stop-color="#949494"/><stop offset="1" stop-color="#5a5a5a"/></linearGradient></defs><polygon points="1.5,9.5 8.7,11.9 8.7,16.2 1.5,13.8" fill="#262626"/><polygon points="8.7,11.9 19.3,8.1 19.3,12.9 8.7,16.2" fill="#4c4f54"/><polygon points="13.4,10.4 15.4,9.7 15.4,14 13.4,14.7" fill="#3a3c40"/><polygon points="1.5,9.5 13,5.4 19.3,8.1 8.7,11.9" fill="url(#svtb3)"/><polygon points="8.7,11.9 19.3,8.1 19.3,8.9 8.7,12.7" fill="#8a8c90"/></svg>
<div class="lb" style="left:253.82px;top:29.10px"><span style="transform:scaleX(0.83)">Servise</span></div>
<svg class="ic" style="left:373.76px;top:4.90px" width="21" height="21" viewBox="0 0 21 21"><circle cx="10.6" cy="10.2" r="9.3" fill="#15100a"/><circle cx="10.6" cy="10.2" r="7.9" fill="#f9ab1c"/><path d="M10.6,3.8 L16.4,13.8 H4.8 Z M10.6,7.4 L8,11.8 H13.2 Z" fill="#111" fill-rule="evenodd"/><path d="M6.4,14 L9,10.8 L15.4,14Z" fill="#111"/><path d="M8.4,12.2 L9.4,11.2 L13.4,13Z" fill="#f9ab1c"/><rect x="0" y="13.5" width="7.7" height="7.6" fill="#ffffff"/><path d="M2.3,14.5 L6.9,14.5 L6.9,19.1 L5.45,17.65 C4.4,18 3.5,19 3.2,20.3 L1.4,20.3 C1.6,18.2 2.6,16.9 3.8,16Z" fill="#1b52b4"/></svg>
<div class="lb" style="left:344.26px;top:29.10px"><span style="transform:scaleX(0.85)">AIMP</span></div>
<svg class="ic" style="left:418.98px;top:4.90px" width="21" height="21" viewBox="0 0 21 21"><defs><linearGradient id="wabb5" x1="0" y1="1" x2="1" y2="0"><stop offset="0" stop-color="#f07a10"/><stop offset=".5" stop-color="#ffb22e"/><stop offset="1" stop-color="#ffd870"/></linearGradient></defs><polygon points="10.8,1 19.6,9.7 10.8,18.4 2,9.7" fill="#e9e9ea"/><polygon points="10.8,3.6 16.9,9.7 10.8,15.8 4.7,9.7" fill="#23232a"/><polygon points="18.6,1.4 13.8,6 16.4,6.8 11,10.8 13.6,11.6 5.4,15.6 9.4,11.8 6.8,11 12,7.4 9.2,6.8 13.6,3.2" fill="url(#wabb5)"/><rect x="0" y="13.5" width="7.7" height="7.6" fill="#ffffff"/><path d="M2.3,14.5 L6.9,14.5 L6.9,19.1 L5.45,17.65 C4.4,18 3.5,19 3.2,20.3 L1.4,20.3 C1.6,18.2 2.6,16.9 3.8,16Z" fill="#1b52b4"/></svg>
<div class="lb" style="left:389.48px;top:29.10px"><span style="transform:scaleX(0.93)">Winamp</span></div>
<svg class="ic" style="left:825.96px;top:4.90px" width="21" height="21" viewBox="0 0 21 21"><defs><linearGradient id="bfob6" x1="1" y1="0" x2="0" y2="1"><stop offset="0" stop-color="#ee5a26"/><stop offset=".55" stop-color="#f07a30"/><stop offset="1" stop-color="#f4a848"/></linearGradient><linearGradient id="bfbb6" x1="0" y1="0" x2="1" y2="1"><stop offset="0" stop-color="#2f8fe6"/><stop offset="1" stop-color="#7ab8f0"/></linearGradient></defs><path d="M0.2,4.2 C0.4,3.4 1.6,3.2 3,3.4 C6.4,4 8.8,5.6 10.4,7.8 L10.6,12 C8.8,12.6 6.8,12 5.4,11 C3,9.4 1,7 0.2,4.2Z" fill="url(#bfbb6)"/><path d="M10.2,7.6 C11.6,4.4 14.4,1.4 17.8,0.4 C19.2,0 20,0.8 20.4,2.4 C21,5.4 20.6,8.6 19.6,11 C17.6,13 14.6,13.8 12.4,13.4 C11,11.8 10.4,9.8 10.2,7.6Z" fill="url(#bfob6)"/><path d="M12.6,13.2 C15,13.6 17.8,12.8 19.8,11.2 C20,13.2 19.6,15.2 18.4,16.4 C17.2,17.6 15.6,18 14.6,17.4 C13.4,16.6 12.6,15 12.6,13.2Z" fill="#f6d20e"/><path d="M7,9.6 C8.6,9.4 10,10 11,11.4 C12.2,13.4 12.8,16 12.4,18.2 C12.2,18.8 11.6,18.8 11,18.4 C9,17 7.6,14.8 7,12.4 C6.8,11.4 6.8,10.4 7,9.6Z" fill="#1ea654"/><path d="M9.8,7.8 C11,9.4 11.8,11.4 12.2,13.4 C11.4,12.6 10.4,11.6 9.6,10.4 C9.4,9.6 9.6,8.6 9.8,7.8Z" fill="#6e72d8"/><rect x="0" y="13.5" width="7.7" height="7.6" fill="#ffffff"/><path d="M2.3,14.5 L6.9,14.5 L6.9,19.1 L5.45,17.65 C4.4,18 3.5,19 3.2,20.3 L1.4,20.3 C1.6,18.2 2.6,16.9 3.8,16Z" fill="#1b52b4"/></svg>
<div class="lb" style="left:796.46px;top:29.10px"><span style="transform:scaleX(0.925)">FishTimer —</span><span style="transform:scaleX(0.94)">ярлык</span></div>
<svg class="ic" style="left:871.18px;top:4.90px" width="21" height="21" viewBox="0 0 21 21"><text x="0.4" y="15.4" font-family="Liberation Sans, sans-serif" font-style="italic" font-weight="bold" font-size="13.6" fill="#f2c81c" transform="translate(0,0)">P</text><text x="7.6" y="15.4" font-family="Liberation Sans, sans-serif" font-weight="bold" font-size="8.6" fill="#8c8c8c">p</text><text transform="translate(11.4,16.2) scale(0.88,1)" x="0" y="0" font-family="Liberation Sans, sans-serif" font-weight="bold" font-size="19.4" fill="#ffffff" stroke="#ffffff" stroke-width="0.7">3</text><rect x="0" y="13.5" width="7.7" height="7.6" fill="#ffffff"/><path d="M2.3,14.5 L6.9,14.5 L6.9,19.1 L5.45,17.65 C4.4,18 3.5,19 3.2,20.3 L1.4,20.3 C1.6,18.2 2.6,16.9 3.8,16Z" fill="#1b52b4"/></svg>
<div class="lb" style="left:841.68px;top:29.10px"><span style="transform:scaleX(0.898)">Русская</span><span style="transform:scaleX(0.902)">рыбалка</span></div>
<svg class="ic" style="left:961.62px;top:4.90px" width="21" height="21" viewBox="0 0 21 21"><rect x="1.2" y="5.6" width="19" height="12.6" rx="1.6" fill="#9a9da2"/><rect x="1.2" y="5.6" width="19" height="3.4" rx="1.4" fill="#c9ccd0"/><rect x="6.4" y="2.8" width="6.6" height="3.6" rx="0.8" fill="#b8bbbf"/><rect x="15" y="3.8" width="3.6" height="2.2" fill="#7d8085"/><rect x="16" y="9" width="4.4" height="9.2" fill="#2a2340"/><circle cx="10.6" cy="12.2" r="5.4" fill="#3c3f46"/><circle cx="10.6" cy="12.2" r="4" fill="#2c6fd0"/><circle cx="10.6" cy="12.2" r="2.2" fill="#123a86"/><circle cx="9.4" cy="10.8" r="0.9" fill="#a8d0ff"/><rect x="0" y="13.5" width="7.7" height="7.6" fill="#ffffff"/><path d="M2.3,14.5 L6.9,14.5 L6.9,19.1 L5.45,17.65 C4.4,18 3.5,19 3.2,20.3 L1.4,20.3 C1.6,18.2 2.6,16.9 3.8,16Z" fill="#1b52b4"/></svg>
<div class="lb" style="left:932.12px;top:29.10px"><span style="transform:scaleX(0.897)">amcap</span></div>
<svg class="ic" style="left:12.00px;top:110.76px" width="21" height="21" viewBox="0 0 21 21"><defs><linearGradient id="ccgb9" x1="0" y1="0" x2="0" y2="1"><stop offset="0" stop-color="#ee5a44"/><stop offset="1" stop-color="#cc2a1e"/></linearGradient></defs><path d="M21.2,4 A9.2,9.6 0 1 0 21.2,15.4 L16,12.2 A3,3 0 1 1 16,7.2 Z" fill="url(#ccgb9)"/><path d="M13.4,1.2 L14.8,1.8 L11.6,9 L10.2,8.4Z" fill="#1d72d4"/><path d="M7.6,8.6 C9.4,7.6 12.2,8.8 12.8,10.8 L11.6,12.8 L6.6,10.4Z" fill="#2a84e4"/><path d="M6.6,10.4 L11.8,12.8 C12,14.6 11,17 10,18.4 C8.4,17.8 6.8,16.4 5.4,15 C4.6,13.6 5.2,11.6 6.6,10.4Z" fill="#f2cf98"/><path d="M9,11.6 L11.8,12.8 C12,14.6 11,17 10,18.4 C9.4,18.2 8.8,17.8 8.2,17.4 C9.2,15.6 9.4,13.4 9,11.6Z" fill="#e4b06a"/><rect x="0" y="13.5" width="7.7" height="7.6" fill="#ffffff"/><path d="M2.3,14.5 L6.9,14.5 L6.9,19.1 L5.45,17.65 C4.4,18 3.5,19 3.2,20.3 L1.4,20.3 C1.6,18.2 2.6,16.9 3.8,16Z" fill="#1b52b4"/></svg>
<div class="lb" style="left:-17.50px;top:134.96px"><span style="transform:scaleX(0.865)">CCleaner</span></div>
<svg class="ic" style="left:57.22px;top:110.76px" width="21" height="21" viewBox="0 0 21 21"><circle cx="10.7" cy="10.2" r="10" fill="#ffffff"/><circle cx="10.7" cy="10.2" r="8.3" fill="#e3162c"/><path d="M3.6,13.4 C3.6,8.4 6.4,4.6 10.8,3 C8.6,5.4 7.4,8.4 7.4,11.4 C7.4,13 7.8,14.2 8.4,15.2 L5.4,16 C4.4,15.2 3.8,14.4 3.6,13.4Z" fill="#fff" opacity=".92"/><path d="M8,15.2 L12.4,13.8 L13.6,12 L14.6,13.4 L16,16 C13.6,18.8 8.6,19.6 5.4,16.4Z" fill="#fff"/><path d="M10.4,4 L12.6,4.8 L12.2,6.4 L11.4,5.6 L10.6,6.2Z" fill="#fff"/><path d="M14.4,8 L16.2,10.6 L15,10.6 L14.6,12.6 L13.4,12.2 L13.8,10.4 L12.8,10.2Z" fill="#fff"/><rect x="0" y="13.5" width="7.7" height="7.6" fill="#ffffff"/><path d="M2.3,14.5 L6.9,14.5 L6.9,19.1 L5.45,17.65 C4.4,18 3.5,19 3.2,20.3 L1.4,20.3 C1.6,18.2 2.6,16.9 3.8,16Z" fill="#1b52b4"/></svg>
<div class="lb" style="left:27.72px;top:134.96px"><span style="transform:scaleX(0.88)">Game Center</span></div>
<svg class="ic" style="left:12.00px;top:163.69px" width="21" height="21" viewBox="0 0 21 21"><g transform="translate(10.7,9.6) scale(1.04) translate(-10.7,-10.2)"><g transform="rotate(45 10.7 10.2)"><rect x="3.5" y="3" width="14.4" height="14.4" rx="1.8" fill="#f4f8fb"/></g><g fill="#219fd6"><polygon points="1.6,10.1 5.7,6 5.7,13.4"/><polygon points="10.5,1 14.6,5.1 7.5,12.2 7.5,4"/><polygon points="16.2,6.2 19.8,9.8 16.2,13.4 12.6,9.8"/><polygon points="10.8,12 14.4,15.6 10.6,19.4 7.4,16.2 7.4,15.4"/></g></g><rect x="0" y="13.5" width="7.7" height="7.6" fill="#ffffff"/><path d="M2.3,14.5 L6.9,14.5 L6.9,19.1 L5.45,17.65 C4.4,18 3.5,19 3.2,20.3 L1.4,20.3 C1.6,18.2 2.6,16.9 3.8,16Z" fill="#1b52b4"/></svg>
<div class="lb" style="left:-17.50px;top:187.89px"><span style="transform:scaleX(0.92)">Kodi</span></div>
<svg class="ic" style="left:12.00px;top:216.62px" width="21" height="21" viewBox="0 0 21 21"><defs><linearGradient id="atgb12" x1="0.9" y1="0" x2="0.1" y2="1"><stop offset="0" stop-color="#a0583a"/><stop offset="0.45" stop-color="#6e3a24"/><stop offset="0.75" stop-color="#4a4a1e"/><stop offset="1" stop-color="#26300e"/></linearGradient><radialGradient id="atsb12" cx=".5" cy=".5" r=".5"><stop offset=".7" stop-color="#000" stop-opacity="0"/><stop offset="1" stop-color="#000" stop-opacity=".55"/></radialGradient></defs><circle cx="10.6" cy="10.6" r="9.7" fill="url(#atgb12)"/><g fill="none" stroke="#b89a78" stroke-width="1" opacity=".75"><ellipse cx="10.8" cy="9.6" rx="5.2" ry="2.1"/><ellipse cx="10.8" cy="9.6" rx="5.2" ry="2.1" transform="rotate(60 10.8 9.6)"/><ellipse cx="10.8" cy="9.6" rx="5.2" ry="2.1" transform="rotate(120 10.8 9.6)"/></g><path d="M8.6,12.4 C9.6,10.4 10.6,9.4 11.6,8.4 C11.4,10.4 10.8,13 9.6,15.4Z" fill="#2a3a14" opacity=".8"/><circle cx="10.6" cy="10.6" r="9.7" fill="url(#atsb12)"/><rect x="0" y="13.5" width="7.7" height="7.6" fill="#ffffff"/><path d="M2.3,14.5 L6.9,14.5 L6.9,19.1 L5.45,17.65 C4.4,18 3.5,19 3.2,20.3 L1.4,20.3 C1.6,18.2 2.6,16.9 3.8,16Z" fill="#1b52b4"/></svg>
<div class="lb" style="left:-17.50px;top:240.82px"><span style="transform:scaleX(0.835)">ATOM RPG</span></div>
<svg class="ic" style="left:57.22px;top:216.62px" width="21" height="21" viewBox="0 0 21 21"><circle cx="10.8" cy="10.6" r="10" fill="#2aa3df"/><g transform="translate(10.6,10.4) scale(.86) translate(-10.6,-10.4)"><path d="M4.4,10.4 L16.2,5.6 C16.8,5.4 17.2,5.8 17,6.6 L15.2,15.4 C15,16 14.6,16.2 14,15.8 L11,13.6 L9.4,15.2 C9.2,15.4 8.9,15.3 8.9,15 L9.1,12.4 L14.4,7.6 L7.8,11.8 L4.6,11 C4.1,10.9 4,10.6 4.4,10.4Z" fill="#fff"/></g><rect x="0" y="13.5" width="7.7" height="7.6" fill="#ffffff"/><path d="M2.3,14.5 L6.9,14.5 L6.9,19.1 L5.45,17.65 C4.4,18 3.5,19 3.2,20.3 L1.4,20.3 C1.6,18.2 2.6,16.9 3.8,16Z" fill="#1b52b4"/></svg>
<div class="lb" style="left:27.72px;top:240.82px"><span style="transform:scaleX(0.873)">Telegram</span></div>
<svg class="ic" style="left:12.00px;top:269.55px" width="21" height="21" viewBox="0 0 21 21"><defs><linearGradient id="edgb14" x1="0" y1="0.2" x2="1" y2="0.6"><stop offset="0" stop-color="#2c9fe8"/><stop offset="0.45" stop-color="#35c4c4"/><stop offset="1" stop-color="#5fe06a"/></linearGradient><linearGradient id="edbb14" x1="0" y1="0" x2="0.6" y2="1"><stop offset="0" stop-color="#3a9ae8"/><stop offset="1" stop-color="#1650b0"/></linearGradient></defs><g transform="translate(10.7,10.2) scale(1.09) translate(-10.7,-10.7)">
<path d="M1,11.6 C0.4,5 5.2,0.8 10.8,0.8 C16.6,0.8 20.6,4.8 20.6,9.6 C20.6,12.6 18.4,14.4 16,14.4 C13.6,14.4 12.6,13.2 13.2,12 C14,10.4 13.2,7.6 9.8,7.4 C5.6,7.2 2.2,10 1,11.6Z" fill="url(#edgb14)"/>
<path d="M1,11.6 C1.2,16.8 5.4,20.6 10.4,20.6 C13,20.6 15.6,19.6 17.4,17.6 C14,19 9.6,17.8 8.4,14.2 C7.6,11.6 8.6,9 9.8,7.4 C5.4,7.2 2,9.8 1,11.6Z" fill="url(#edbb14)"/>
<path d="M8.4,14.2 C9.6,17.8 14,19 17.4,17.6 C18.6,16.4 19.4,15 19.8,13.6 C17,16 12.4,16.2 10.4,13 C9.2,11 9.2,9 9.8,7.4 C8.6,9 7.6,11.6 8.4,14.2Z" fill="#1a5cbc"/></g><rect x="0" y="13.5" width="7.7" height="7.6" fill="#ffffff"/><path d="M2.3,14.5 L6.9,14.5 L6.9,19.1 L5.45,17.65 C4.4,18 3.5,19 3.2,20.3 L1.4,20.3 C1.6,18.2 2.6,16.9 3.8,16Z" fill="#1b52b4"/></svg>
<div class="lb" style="left:-17.50px;top:293.75px"><span style="transform:scaleX(0.94)">Microsoft</span><span style="transform:scaleX(0.87)">Edge</span></div>
<svg class="ic" style="left:57.22px;top:269.55px" width="21" height="21" viewBox="0 0 21 21"><circle cx="10.7" cy="10.6" r="10" fill="#14897e"/><path d="M3,4 A10,10 0 0 1 18.6,4.4 L10.6,10.6Z" fill="#1a9a8c"/><polygon points="3.4,4.6 19,6 10.8,10.6" fill="#27a4e6"/><polygon points="2,4 9.4,7.4 11.2,10.8 6.6,10.4" fill="#a6e83a"/><polygon points="2,4 6.6,10.4 4.6,8.6" fill="#c8f45a"/><polygon points="19.6,5.6 13.6,10.8 10.4,10.8 12.6,8.4" fill="#8fdc34"/><polygon points="8.6,9.6 12.2,10.6 9.6,19.8 7.2,17.4" fill="#7ad830"/><polygon points="8.6,10 7.2,17.4 3.8,17.2 6.6,13.2" fill="#0f6f68"/><path d="M11.8,11.4 H19.8 V15.4 C19.8,18 17.8,19.6 15.8,20.4 C13.8,19.6 11.8,18 11.8,15.4Z" fill="#ffffff"/><rect x="12.5" y="12.1" width="3" height="3.2" fill="#2a7ae0"/><rect x="16.1" y="12.1" width="3" height="3.2" fill="#f5b21c"/><path d="M12.5,15.9 H15.5 V19.5 C13.9,18.8 12.5,17.6 12.5,16Z" fill="#f5b21c"/><path d="M16.1,15.9 H19.1 V16 C19.1,17.6 17.7,18.8 16.1,19.5Z" fill="#2a7ae0"/><rect x="0" y="13.5" width="7.7" height="7.6" fill="#ffffff"/><path d="M2.3,14.5 L6.9,14.5 L6.9,19.1 L5.45,17.65 C4.4,18 3.5,19 3.2,20.3 L1.4,20.3 C1.6,18.2 2.6,16.9 3.8,16Z" fill="#1b52b4"/></svg>
<div class="lb" style="left:27.72px;top:293.75px"><span style="transform:scaleX(0.871)">HiSuite</span></div>
<svg class="ic" style="left:12.00px;top:322.48px" width="21" height="21" viewBox="0 0 21 21"><defs><linearGradient id="argb16" x1="0" y1="0" x2="1" y2="1"><stop offset="0" stop-color="#9a845a"/><stop offset=".5" stop-color="#6a5636"/><stop offset="1" stop-color="#2a2010"/></linearGradient></defs><g stroke="url(#argb16)" stroke-width="2" stroke-linecap="round"><line x1="18.00" y1="10.60" x2="20.60" y2="10.60"/><line x1="17.01" y1="14.30" x2="19.26" y2="15.60"/><line x1="14.30" y1="17.01" x2="15.60" y2="19.26"/><line x1="10.60" y1="18.00" x2="10.60" y2="20.60"/><line x1="6.90" y1="17.01" x2="5.60" y2="19.26"/><line x1="4.19" y1="14.30" x2="1.94" y2="15.60"/><line x1="3.20" y1="10.60" x2="0.60" y2="10.60"/><line x1="4.19" y1="6.90" x2="1.94" y2="5.60"/><line x1="6.90" y1="4.19" x2="5.60" y2="1.94"/><line x1="10.60" y1="3.20" x2="10.60" y2="0.60"/><line x1="14.30" y1="4.19" x2="15.60" y2="1.94"/><line x1="17.01" y1="6.90" x2="19.26" y2="5.60"/></g><circle cx="10.6" cy="10.6" r="7.8" fill="url(#argb16)"/><circle cx="10.6" cy="10.6" r="6.2" fill="#161428"/><circle cx="10.6" cy="10.6" r="5.4" fill="#3448bc"/><circle cx="12" cy="8.4" r="2" fill="#5a6ae0" opacity=".7"/><path d="M9.2,6 C10.6,7.6 10.4,9.6 9.4,10.8 C8.6,12 9,14 10,15.4 M12.2,6.4 C11.4,8 11.8,9.6 12.4,11 C13,12.4 12.4,14 11.6,15.2" fill="none" stroke="#10102c" stroke-width="1.5"/><rect x="0" y="13.5" width="7.7" height="7.6" fill="#ffffff"/><path d="M2.3,14.5 L6.9,14.5 L6.9,19.1 L5.45,17.65 C4.4,18 3.5,19 3.2,20.3 L1.4,20.3 C1.6,18.2 2.6,16.9 3.8,16Z" fill="#1b52b4"/></svg>
<div class="lb" style="left:-17.50px;top:346.68px"><span style="transform:scaleX(0.925)">Arcanum</span></div>
<svg class="ic" style="left:12.00px;top:428.34px" width="21" height="21" viewBox="0 0 21 21"><circle cx="10.6" cy="10.6" r="10" fill="#ffffff"/><path d="M4.4,4.4 L6.6,3.4 L10.8,9.4 L14.6,3.4 L16.8,4.4 L12,11.6 L12,18.4 L9.6,18.4 L9.6,11.6Z" fill="#e8192c"/><rect x="0" y="13.5" width="7.7" height="7.6" fill="#ffffff"/><path d="M2.3,14.5 L6.9,14.5 L6.9,19.1 L5.45,17.65 C4.4,18 3.5,19 3.2,20.3 L1.4,20.3 C1.6,18.2 2.6,16.9 3.8,16Z" fill="#1b52b4"/></svg>
<div class="lb" style="left:-17.50px;top:452.54px"><span style="transform:scaleX(0.845)">Yandex</span></div>
<svg class="ic" style="left:12.00px;top:481.27px" width="21" height="21" viewBox="0 0 21 21"><circle cx="10.6" cy="10.6" r="9.8" fill="#fbc116"/><path d="M10.6,10.6 L2.1,5.7 A9.8,9.8 0 0 1 19.1,5.7 Z" fill="#e33b2e"/><path d="M10.6,0.8 A9.8,9.8 0 0 1 19.1,5.7 L10.6,5.7Z" fill="#e33b2e"/><path d="M10.6,10.6 L2.1,5.7 A9.8,9.8 0 0 0 10.6,20.4 L14.9,13.1Z" fill="#2da94f"/><path d="M19.1,5.7 A9.8,9.8 0 0 1 10.6,20.4 L14.9,13.1 Z" fill="#fbc116"/><path d="M10.6,5.7 L19.1,5.7 L14.9,13.1Z" fill="#fbc116"/><circle cx="10.6" cy="10.6" r="4.9" fill="#ffffff"/><circle cx="10.6" cy="10.6" r="3.9" fill="#4688f1"/><rect x="0" y="13.5" width="7.7" height="7.6" fill="#ffffff"/><path d="M2.3,14.5 L6.9,14.5 L6.9,19.1 L5.45,17.65 C4.4,18 3.5,19 3.2,20.3 L1.4,20.3 C1.6,18.2 2.6,16.9 3.8,16Z" fill="#1b52b4"/></svg>
<div class="lb" style="left:-17.50px;top:505.47px"><span style="transform:scaleX(0.902)">Google</span><span style="transform:scaleX(0.898)">Chrome</span></div>
<svg class="ic" style="left:12.00px;top:534.20px" width="21" height="21" viewBox="0 0 21 21"><circle cx="10.7" cy="10.3" r="10.5" fill="#ff7a0e"/><path d="M18.8,16.6 L11.76,2.95 A2.3,2.3 0 1 0 8.04,5.65Z M18.8,16.6 L7.26,8.59 A1.6,1.6 0 1 0 5.74,11.41Z M18.8,16.6 L3.74,13.61 A1.2,1.2 0 1 0 3.46,15.99Z" fill="#fff"/><rect x="0" y="13.5" width="7.7" height="7.6" fill="#ffffff"/><path d="M2.3,14.5 L6.9,14.5 L6.9,19.1 L5.45,17.65 C4.4,18 3.5,19 3.2,20.3 L1.4,20.3 C1.6,18.2 2.6,16.9 3.8,16Z" fill="#1b52b4"/></svg>
<div class="lb" style="left:-17.50px;top:558.40px"><span style="transform:scaleX(0.865)">Avast Free</span><span style="transform:scaleX(0.92)">Antivirus</span></div>
<svg class="ic" style="left:961.62px;top:534.20px" width="21" height="21" viewBox="0 0 21 21"><path d="M2.4,3.4 L19.2,3.4 L16.8,18.8 C13,20.6 8.6,20.6 4.8,18.8Z" fill="#9097a0" opacity="0.92"/><path d="M3.2,4.6 L8.6,5.6 L8.4,19.6 C7,19.4 5.8,19.2 4.8,18.8Z" fill="#c9cfd6" opacity="0.75"/><path d="M13.6,5.6 L18.8,4.6 L16.8,18.8 C15.8,19.2 14.8,19.4 13.6,19.6Z" fill="#777e87" opacity="0.8"/><ellipse cx="10.8" cy="3.4" rx="8.4" ry="2.3" fill="#5f666e" stroke="#cfd4d9" stroke-width="0.8"/><g fill="#1f86ee"><path d="M9.6,8.6 L11.6,8.2 L13,10.6 L11.8,11.2 L10.8,9.6 L9.8,10.2Z"/><path d="M13.4,11.4 L14.2,13.4 L12.4,15 L10.8,15 L10.8,13.6 L12.2,13.6 L12.4,12.4Z"/><path d="M9.6,15 L7.6,14.6 L7,12.4 L8.2,10.6 L9.2,11.4 L8.4,12.6 L9.4,13.4Z"/></g></svg>
<div class="lb" style="left:932.12px;top:558.40px"><span style="transform:scaleX(0.875)">Корзина</span></div>
<div class="tb">
<svg class="win" viewBox="0 0 10 10" width="10.4" height="10.4"><path d="M0,1.4 L4.2,0.8 V4.7 H0Z M4.8,0.7 L10,0 V4.7 H4.8Z M0,5.3 H4.2 V9.2 L0,8.6Z M4.8,5.3 H10 V10 L4.8,9.3Z" fill="#fff"/></svg>
<div class="sb"><svg class="mg" viewBox="0 0 10 10" width="9.4" height="9.4"><circle cx="6.2" cy="3.8" r="3" fill="none" stroke="#222" stroke-width="0.9"/><path d="M4,6 L0.6,9.4" stroke="#222" stroke-width="1"/></svg><span class="st">Введите здесь текст для поиска</span></div>
<svg class="tpp" width="16" height="14" viewBox="0 0 16 14"><text x="0" y="10.8" font-family="Liberation Sans, sans-serif" font-style="italic" font-weight="bold" font-size="9.4" fill="#f2c81c">P</text><text x="5" y="11" font-family="Liberation Sans, sans-serif" font-weight="bold" font-size="6.4" fill="#8a8a8a">p</text><text transform="translate(7.2,11.4) scale(.92,1)" x="0" y="0" font-family="Liberation Sans, sans-serif" font-weight="bold" font-size="13.2" fill="#ffffff" stroke="#ffffff" stroke-width="0.5">3</text></svg>
<svg class="tya" width="14" height="14" viewBox="0 0 21 21"><circle cx="10.6" cy="10.6" r="10" fill="#ffffff"/><path d="M4.4,4.4 L6.6,3.4 L10.8,9.4 L14.6,3.4 L16.8,4.4 L12,11.6 L12,18.4 L9.6,18.4 L9.6,11.6Z" fill="#e8192c"/></svg>
<div class="ul" style="left:237.2px;width:24px"></div><div class="ul" style="left:266.4px;width:24.2px"></div>
<svg class="tray" width="150" height="24.5" viewBox="850 600.5 150 24.5">
<path d="M854.4,615 L858,611.4 L861.6,615" fill="none" stroke="#fff" stroke-width="1"/>
<g fill="none" stroke="#e8e8e8" stroke-width="0.8"><rect x="870" y="610.6" width="4.6" height="5.6" rx="0.6"/><path d="M874.6,612.4 L876.2,611.6 V615.4 L874.6,614.6"/><path d="M870.6,609 H874 M870.6,617.8 H874"/></g>
<g fill="none" stroke="#e8e8e8" stroke-width="0.8"><rect x="883.6" y="609.6" width="7.4" height="5.6"/><path d="M881.6,611.4 H883.6 M881.6,611.4 V617.6 H886.6 M885.6,617.6 H889.6 M887.4,615.2 V617.4"/></g>
<g fill="none" stroke="#e8e8e8" stroke-width="0.8"><path d="M896,612 H897.6 L900,609.6 V618 L897.6,615.6 H896Z"/></g><circle cx="903.4" cy="615.6" r="2.3" fill="#e81123"/><path d="M902.4,614.6 L904.4,616.6 M904.4,614.6 L902.4,616.6" stroke="#fff" stroke-width="0.6"/>
<g fill="none" stroke="#f0f0f0" stroke-width="0.85"><path d="M975.8,609 H985.2 V615.6 H982 L980.5,617.2 L979,615.6 H975.8Z"/></g>
<rect x="996.6" y="601" width="0.5" height="24" fill="#6a6a6a"/>
</svg>
<span class="lang">РУС</span><span class="tm">23:35</span><span class="dt">25.03.2022</span>
</div>
</div></div>
<div class="g">
<!-- main frame -->
<div class="wood" style="left:248px;top:121.2px;width:504px;height:361.4px;box-shadow:inset 0 0 0 0.6px #8a3a10;"></div>
<!-- scene -->
<div style="left:250px;top:139.6px;width:393px;height:246.4px;background:linear-gradient(180deg,#2a232b 0%,#2b2329 14%,#2a2124 24%,#241a18 29%,#120d0a 31%,#0d0907 40%,#0a0706 52%,#060403 100%);box-shadow:0 0 0 0.7px #7c1606;"></div>
<svg style="left:250px;top:139.6px" width="60" height="247" viewBox="250 139.6 60 247">
<path d="M250,214 C254,211.6 257,213 260,212 C263,210 266,212.4 269,211 C272,208.6 275,208 278,210 C281,211.6 284,210 287,211 C291,211.6 296,210 299,208.6 C302,207.6 306,209 310,208 V252 H250Z" fill="#18120d"/><path d="M250,246 H310 V256 H250Z" fill="#0d0907" opacity=".8"/>
<rect x="296.6" y="218.6" width="2" height="2.6" fill="#c9a24a" opacity=".8"/><rect x="300.6" y="224" width="1.4" height="2" fill="#a8843a" opacity=".7"/><rect x="265" y="233" width="1.2" height="1.6" fill="#6a5a2a" opacity=".7"/><rect x="286" y="226.6" width="1.2" height="1.4" fill="#7a6a3a" opacity=".6"/><rect x="299" y="267.4" width="3.6" height="1" fill="#b8861a" opacity=".8"/>
<rect x="292.3" y="259" width="1" height="25" fill="#c2170f"/>
<rect x="292.2" y="284" width="1.2" height="57" fill="#262120"/><rect x="292.2" y="306" width="1.2" height="1" fill="#5a5550"/><rect x="292.2" y="326" width="1.2" height="1" fill="#5a5550"/>
<rect x="291.8" y="341" width="2.1" height="45" fill="#dd8a1c"/><rect x="291.8" y="341" width="0.7" height="45" fill="#a8600a"/>
<path d="M289.6,350.6 L295.6,352.6 M293,355 L288.4,358.4 L287.4,361.6" fill="none" stroke="#33406a" stroke-width="1"/>
<circle cx="292.6" cy="353" r="2.2" fill="#26345e"/><circle cx="292.2" cy="352.6" r=".8" fill="#8a9ac0"/>
</svg>
<!-- top info panel -->
<div class="pn" style="left:250.4px;top:124px;width:173.4px;height:23.8px;"></div>
<span class="gt" style="left:268.4px;top:140.9px;font-size:4.9px;line-height:7px;color:#66665a;">Время:</span>
<span class="ls" style="left:290px;top:140.8px;font-size:5.9px;line-height:7px;font-weight:700;color:#111;">00:00 ЧТ</span>
<span class="gt" style="left:325.6px;top:140.9px;font-size:4.9px;line-height:7px;color:#66665a;font-style:italic">Деньги:</span>
<span class="ls" style="left:355px;top:140.8px;font-size:5.9px;line-height:7px;font-weight:700;color:#111;">46 349 445 руб.</span>
<!-- medal panel -->
<div class="pn" style="left:426.6px;top:124.4px;width:99.8px;height:13px;"></div>
<svg style="left:428px;top:124.4px" width="70" height="14" viewBox="428 124.4 70 14">
<g id="md"><path d="M436.6,129.8 L439.4,126.4" stroke="#3c3c38" stroke-width="1.5"/><circle cx="434.4" cy="132.8" r="4.1" fill="#b4b4ae" stroke="#6e6e68" stroke-width="0.7"/><circle cx="433.6" cy="132" r="2.2" fill="#dededa"/><path d="M432.6,133.6 C433.6,131 435.6,131 436,133.4" stroke="#7a7a74" stroke-width=".7" fill="none"/></g>
<use href="#md" x="13.5"/><use href="#md" x="26.7"/><use href="#md" x="39.9"/><use href="#md" x="53.4"/>
</svg>
<!-- top buttons -->
<div class="btn" style="left:536px;top:125.4px;width:56.4px;height:9.2px;font-size:6.1px;line-height:9px;">Онлайн сервисы</div>
<div class="btn" style="left:598.4px;top:125.4px;width:10.2px;height:9.2px;font-size:7.6px;line-height:10.6px;font-weight:700;">?</div>
<div class="btn" style="left:615.6px;top:125.4px;width:22.6px;height:9.2px;font-size:6.1px;line-height:9px;">Меню</div>
<!-- depth panel -->
<div style="left:646px;top:124px;width:103.2px;height:49.4px;background:#333333;"></div>
<svg style="left:646px;top:124px" width="104" height="50" viewBox="646 124 104 50"><path d="M648,131.6 L653.6,132.2 L660,134.6 L666,135.8 L674,139 L684,140.4 L692,141.6 L702,146 L712,147.4 L721,149.6 L731,149.8 L738,151.8 L746,154.6" fill="none" stroke="#bcb59e" stroke-width="1.05"/><circle cx="706.8" cy="132" r="1.6" fill="#8c8a7a"/></svg>
<span class="ls" style="left:720px;top:160.2px;font-size:6.5px;line-height:8px;font-weight:700;color:#f0eedf;letter-spacing:.2px">5,27 m</span>
<!-- map -->
<div style="left:696.4px;top:181.6px;width:44.4px;height:56.2px;background:#b2aa8a;box-shadow:inset -0.8px -0.8px 0 0 #dcd8c0;"></div>
<svg style="left:696.4px;top:177px" width="45.4" height="61" viewBox="696.4 177 45.4 61">
<defs><linearGradient id="roll" x1="0" y1="0" x2="0" y2="1"><stop offset="0" stop-color="#f4ecd8"/><stop offset=".45" stop-color="#e6d8ba"/><stop offset="1" stop-color="#9a8460"/></linearGradient><linearGradient id="rollx" x1="0" y1="0" x2="1" y2="0"><stop offset="0" stop-color="#000" stop-opacity="0"/><stop offset=".8" stop-color="#000" stop-opacity="0"/><stop offset="1" stop-color="#3a2010" stop-opacity=".55"/></linearGradient></defs>
<path d="M696.4,182 H705.6 C705.8,186 704.6,190 704.8,194 C705,198 703.4,201 702.6,205 C702,209 703.6,213 703.2,217 C702.8,222 704.4,226 704.2,230 C704,233 704.6,235 704.4,237.4 H696.4Z" fill="#4fa7ae"/>
<path d="M705.6,182 C705.8,186 704.6,190 704.8,194 C705,198 703.4,201 702.6,205 C702,209 703.6,213 703.2,217 C702.8,222 704.4,226 704.2,230 C704,233 704.6,235 704.4,237.4" fill="none" stroke="#3a7f7a" stroke-width=".7" opacity=".8"/>
<path d="M696.4,199 L704,199.8 M696.4,205.4 L703,203.2 M696.4,219.4 H702" stroke="#c8bf9c" stroke-width="0.9"/>
<path d="M700.4,224 C701.6,223 703,225 702.8,228 C702.8,231 702.6,233.6 701.4,234 C700.2,232 699.8,227 700.4,224Z" fill="#bdb58c"/>
<path d="M696.4,191 C697.6,192 697.4,194.6 696.4,195.6Z" fill="#bdb58c"/>
<path d="M707,186.6 C710,185.6 714,186.6 716,188 C713,189.6 709,189 707,186.6Z M720,236.6 C723,233.6 727,234 729,236.8Z" fill="#b9b866" opacity=".8"/>
<path d="M720.6,183 V237 M733.8,183 V237 M705,199.6 H740 M704,215.2 H740" stroke="#9c9672" stroke-width="0.5" opacity=".7"/>
<rect x="696.4" y="177.2" width="45" height="5.6" rx="1.8" fill="url(#roll)"/><rect x="696.4" y="177.2" width="45" height="5.6" rx="1.8" fill="url(#rollx)"/>
</svg>
<!-- right buttons -->
<div class="btn" style="left:690px;top:244.4px;width:50.4px;height:9.2px;font-size:6.3px;line-height:9px;text-align:left;padding-left:3.8px;box-shadow:none">На базу</div>
<div class="btg" style="left:690px;top:261.6px;width:50.4px;height:10.2px;font-size:6.1px;line-height:10px;text-align:left;padding-left:5.6px;letter-spacing:.1px">ойти в штаб</div>
<div class="btg" style="left:698.4px;top:277.8px;width:44px;height:9.8px;font-size:6px;line-height:9.6px;text-align:left;padding-left:10.6px;letter-spacing:.15px">Багажник</div>
<svg style="left:700.6px;top:280.6px" width="7" height="4.4" viewBox="0 0 7 4.4"><path d="M0.4,3.2 V1.8 L1.6,0.4 H5 L6.4,1.8 V3.2Z" fill="#e8e8e4"/><circle cx="1.8" cy="3.4" r="0.9" fill="#e8e8e4"/><circle cx="5" cy="3.4" r="0.9" fill="#e8e8e4"/></svg>
<!-- right info panel -->
<div class="pn" style="left:690px;top:289.4px;width:58.8px;height:81px;"></div>
<span class="ls" style="left:693.4px;top:293px;font-size:7.6px;line-height:8px;font-weight:700;color:#222;letter-spacing:.5px">акова</span>
<span class="ls" style="left:692px;top:319.6px;font-size:6px;line-height:7px;color:#1a1ac0;text-decoration:underline;font-weight:700">лку</span>
<span class="gt" style="left:696.6px;top:326.4px;font-size:5.3px;line-height:7px;color:#555;">: 22 час.</span>
<span class="gt" style="left:696px;top:332.6px;font-size:5.3px;line-height:7px;color:#555;">0 000 руб.</span>
<span class="gt" style="left:696px;top:338.6px;font-size:5.3px;line-height:7px;color:#555;">1</span>
<div class="btn" style="left:690px;top:375.2px;width:50px;height:8.8px;font-size:5.6px;line-height:8.6px;text-align:left;padding-left:6px;font-weight:700;box-shadow:none">аты...</div>
<!-- bottom right big panel -->
<div class="pn" style="left:564.4px;top:388px;width:184.8px;height:92.2px;"></div>
<div class="btn" style="left:572.4px;top:464px;width:30px;height:10.2px;font-size:5.2px;line-height:10px;box-shadow:0 0 0 0.8px #6a3a2a">Подробно</div>
<!-- bottom left panels -->
<div class="pn" style="left:250.6px;top:388.6px;width:41.6px;height:53.2px;"></div>
<div style="left:256.4px;top:393px;width:10.2px;height:41.6px;background:linear-gradient(90deg,#c9cfbc,#d9dfcf 30%,#d6dccc 70%,#c9cfbc);border-bottom:0.8px solid #8a8a7a"></div>
<div style="left:273px;top:393px;width:10.2px;height:41.6px;background:linear-gradient(90deg,#c9cfbc,#d9dfcf 30%,#d6dccc 70%,#c9cfbc);border-bottom:0.8px solid #8a8a7a"></div>
<span class="ls" style="left:254.8px;top:436.4px;font-size:5.6px;line-height:6px;font-weight:700;color:#0a0a0a;text-shadow:0.7px 0 0 #fff,-0.7px 0 0 #fff,0 0.7px 0 #fff,0 -0.7px 0 #fff,0.5px 0.5px 0 #fff,-0.5px -0.5px 0 #fff,0.5px -0.5px 0 #fff,-0.5px 0.5px 0 #fff,0 0 1.2px #fff">0,00</span>
<span class="ls" style="left:271.6px;top:436.4px;font-size:5.6px;line-height:6px;font-weight:700;color:#0a0a0a;text-shadow:0.7px 0 0 #fff,-0.7px 0 0 #fff,0 0.7px 0 #fff,0 -0.7px 0 #fff,0.5px 0.5px 0 #fff,-0.5px -0.5px 0 #fff,0.5px -0.5px 0 #fff,-0.5px 0.5px 0 #fff,0 0 1.2px #fff">0,00</span>
<div style="left:250.6px;top:446.2px;width:41.6px;height:33.6px;background:#efeedd;box-shadow:0 0 0 0.7px #8e2a10;"></div>
<svg style="left:250.6px;top:446.2px" width="42" height="34" viewBox="250.6 446.2 42 34">
<defs><linearGradient id="bk" x1="0" y1="0" x2="1" y2="0"><stop offset="0" stop-color="#a04a08"/><stop offset=".35" stop-color="#d9761a"/><stop offset="1" stop-color="#8e3f06"/></linearGradient></defs>
<ellipse cx="279" cy="472.4" rx="11" ry="4.6" fill="#5a5a50" opacity=".55"/>
<path d="M256.6,453 L283,453 L279.6,474 C276,476.8 263.4,476.8 260.6,474Z" fill="url(#bk)"/>
<ellipse cx="269.8" cy="453" rx="13.2" ry="3.4" fill="#c66410"/><ellipse cx="269.8" cy="453.4" rx="11.6" ry="2.5" fill="#a85008"/>
<path d="M257.6,459 C260,467 272,466.6 280.6,457.6" fill="none" stroke="#c8ccd0" stroke-width="1.7"/>
</svg>
<!-- pot, bag -->
<svg style="left:318px;top:449px" width="80" height="28" viewBox="318 449 80 28">
<defs><radialGradient id="pot" cx=".35" cy=".3" r=".8"><stop offset="0" stop-color="#4a4a4a"/><stop offset=".5" stop-color="#141414"/><stop offset="1" stop-color="#000"/></radialGradient><linearGradient id="bag" x1="0" y1="0" x2="1" y2="1"><stop offset="0" stop-color="#d2c09a"/><stop offset=".45" stop-color="#b49a70"/><stop offset="1" stop-color="#6e5836"/></linearGradient></defs>
<path d="M321,452.6 C321,466 326,472.4 335.4,472.4 C345,472.4 350,466 350,452.6Z" fill="url(#pot)"/>
<ellipse cx="328" cy="462" rx="2.4" ry="4" fill="#6a6a6a" opacity=".35"/><ellipse cx="335.4" cy="452.6" rx="14.6" ry="3.4" fill="#1a1a1a"/><ellipse cx="335.4" cy="452.4" rx="12.4" ry="2.6" fill="#c9bf9a"/><ellipse cx="333" cy="452" rx="4" ry="1.4" fill="#e7e2c8"/><ellipse cx="340" cy="452.8" rx="3" ry="1.1" fill="#c98a3a"/>
<path d="M369,450 L394,450 C393,458 392,468 386,473.6 C378,475 368,472 364,466 C363,459 365,454 369,450Z" fill="url(#bag)"/>
<path d="M366,462 C372,466 384,466 390,462 M367,456 C374,460 386,459 392,454 M372,451 C371,458 372,466 376,473 M380,450 C379,458 380,466 384,473" stroke="#7a6440" stroke-width="0.7" fill="none" opacity=".8"/><path d="M386,450 L394,450 C393,458 392,468 386,473.6Z" fill="#5a4628" opacity=".45"/>
</svg>
<div class="btn" style="left:406.6px;top:451.4px;width:9.6px;height:9.2px;font-size:6px;line-height:9.2px;">2</div>
<div style="left:406.6px;top:466.8px;width:9.6px;height:8.8px;background:#d9d8b9;box-shadow:0 0 0 .6px #7a7a6a;font-family:'DejaVu Sans',sans-serif;font-size:5.6px;line-height:8.8px;text-align:center;color:#444;font-weight:700">3</div>
<!-- rod slots -->
<div style="left:422px;top:449.6px;width:138.6px;height:30.2px;background:linear-gradient(90deg,#f1f0e2 0,#f1f0e2 34.6%,#cfcfc0 35.4%,#ecebdc 36.6%,#efeee0 69.4%,#d2d2c2 70.2%,#ecebdc 71.6%,#efeee0 100%);"></div>
<svg style="left:430px;top:449.6px" width="8" height="3" viewBox="0 0 8 3"><path d="M0.6,0 L3.4,2.4 L6.4,0Z" fill="#e8872a"/></svg>
<span style="left:427.6px;top:452.6px;font-family:'DejaVu Sans',sans-serif;font-size:4.3px;line-height:5.4px;font-weight:700;color:#1c1c1c;white-space:nowrap">PowerStic...</span>
<span style="left:427.6px;top:457.8px;font-family:'DejaVu Sans',sans-serif;font-size:4.3px;line-height:5.4px;font-weight:700;color:#1c1c1c;white-space:nowrap">125 кг</span>
<div class="btn" style="left:424.4px;top:467.2px;width:29.8px;height:9.6px;font-size:5px;line-height:9.4px;box-shadow:0 0 0 .6px #6a3a2a">Настроить</div>
<div class="btn" style="left:458px;top:467.2px;width:10.6px;height:9.6px;font-size:5.4px;line-height:9.6px;box-shadow:0 0 0 .6px #6a3a2a">▼</div>
<svg style="left:524px;top:449.6px" width="34" height="24" viewBox="524 449.6 34 24"><path d="M530.4,467.4 C529.4,465.6 530.6,463.8 533,462.6 C538.6,459.8 544.6,455.6 549,450.8 L551.4,452.2 C548.4,457.6 543.4,461.8 538,464.8 C535.8,466 534.8,468.6 532.6,468.8 C531.4,468.8 530.8,468.2 530.4,467.4Z" fill="#4e3ca0"/><path d="M533.4,463.4 C539.4,460.6 545.4,456.2 549.6,451.4" stroke="#8a78d8" stroke-width=".8" fill="none"/><path d="M538,462 L540.4,463.4 M541.6,459.6 L544,461" stroke="#2e2270" stroke-width=".7"/></svg>
<span class="gt" style="left:526.4px;top:475.2px;font-size:4.2px;line-height:5px;color:#222;">Маленькая</span>
<!-- blue thing -->
<div style="left:299.6px;top:398.4px;width:3.8px;height:22.6px;background:linear-gradient(180deg,#e8e8e8 0,#e8e8e8 12%,#2a6fc8 14%,#1d5ab0 100%);"></div>

<!-- ===== dialog ===== -->
<div class="wood" style="left:303.2px;top:155px;width:393.2px;height:294.4px;box-shadow:inset 0 0 0 0.8px #8a2c08, inset 0 1.6px 0.6px rgba(240,150,90,.55), inset 0 -1.2px 0 #a30c06, inset 1.2px 0 0 #a30c06, inset -1.1px 0 0 #9a1208, -1px 1px 2px rgba(0,0,0,.5);"></div>
<span class="gt" style="left:311px;top:161.2px;font-size:5.5px;font-weight:700;line-height:7px;color:#1a1a1a;text-shadow:0.5px 0.5px 0.4px #e2c4a0,-0.4px -0.4px 0.4px #e2c4a0">Садок</span>
<div style="left:682.8px;top:158.6px;width:10px;height:10px;background:#343434;"></div>
<svg style="left:682.8px;top:158.6px" width="10" height="10" viewBox="0 0 10 10"><path d="M2,2 L8,8 M8,2 L2,8" stroke="#f0f0e8" stroke-width="1.3"/></svg>
<div class="pl" style="left:311px;top:172.6px;width:168.8px;height:124.4px;"></div>
<div class="pl" style="left:483.4px;top:172.6px;width:205.4px;height:269.6px;"></div>
<div style="left:311px;top:300.8px;width:168.2px;height:141.2px;background:#dbdbbe;box-shadow:0 0 0 1.2px #a01008, inset 0.5px 1px 1.6px rgba(60,60,40,.4);"></div>
<!-- left info text -->
<span class="ls" style="left:380.8px;top:177.6px;font-size:9.4px;line-height:12px;font-weight:700;color:#c4500e;">Кохаку</span>
<span class="ls" style="left:319.6px;top:190.1px;font-size:8.15px;line-height:10px;color:#2c2c2c;">Вес: 2,457 кг</span>
<span class="gt" style="left:319.6px;top:203.2px;font-size:6.4px;line-height:7.8px;">На что поймана: Манка</span>
<span class="gt" style="left:319.6px;top:211px;font-size:6.4px;line-height:7.8px;">Где: Влтава, Стракова академия</span>
<span class="gt" style="left:319.6px;top:218.8px;font-size:6.4px;line-height:7.8px;">Оценивается с: 7 кг</span>
<span class="gt" style="left:319.6px;top:226.6px;font-size:6.4px;line-height:7.8px;">Вид: Ценный</span>
<div class="btn" style="left:318.4px;top:282.4px;width:23px;height:9.4px;font-size:5.8px;line-height:9.2px;box-shadow:0 0 0 .6px #6a3a2a">Меню</div>
<span class="ls" style="right:523.6px;top:278.6px;font-size:7.3px;line-height:8px;font-weight:700;color:#1a1a1a;">Рыб в садке: 70 / 300</span>
<span class="ls" style="right:523.6px;top:285.6px;font-size:7.3px;line-height:8px;font-weight:700;color:#1a1a1a;">Общий вес: 222,988 кг</span>
<!-- list -->
<div class="row" style="top:303.4px"><i><b>Карась золотой</b></i><u><b>2,719 кг</b></u></div>
<div class="row" style="top:314.2px"><i>Карп</i><u>860 гр</u></div>
<div class="row" style="top:325px"><i>Карп голый</i><u>2,261 кг</u></div>
<div class="row" style="top:335.8px"><i>Карп голый</i><u>2,324 кг</u></div>
<div class="row" style="top:346.6px"><i>Окунь</i><u>184 гр</u></div>
<div class="row" style="top:357.4px"><i><b>Карась золотой</b></i><u><b>3,271 кг</b></u></div>
<div class="row" style="top:368.2px"><i><b>Сазан</b></i><u><b>5,64 кг</b></u></div>
<div class="row" style="top:379px"><i><b>Карась серебряный</b></i><u><b>2,682 кг</b></u></div>
<div class="row" style="top:389.8px"><i>Карп голый</i><u>1,355 кг</u></div>
<div class="row sel" style="top:400.6px"><i>Кохаку</i><u>2,457 кг</u></div>
<div class="row" style="top:411.4px"><i><b>Карась золотой</b></i><u><b>1,883 кг</b></u></div>
<div class="row" style="top:422.2px"><i>Карп</i><u>816 гр</u></div>
<!-- scrollbar -->
<div style="left:469.8px;top:303.4px;width:8.2px;height:138px;background:#f0f0f0;"></div>
<div style="left:469.8px;top:410.4px;width:8.2px;height:22px;background:#c1c1c1;"></div>
<svg style="left:469.8px;top:303.4px" width="8.2" height="138" viewBox="0 0 8.2 138"><path d="M2.2,5.6 L4.1,3.6 L6,5.6" fill="none" stroke="#444" stroke-width="0.9"/><path d="M2.2,132 L4.1,134 L6,132" fill="none" stroke="#444" stroke-width="0.9"/></svg>
<!-- right panel text -->
<div class="gt" style="left:492.8px;top:338.9px;font-size:6px;line-height:6.75px;color:#5a5a5a;white-space:nowrap;">Декоративный, одомашненный в Японии, подвид<br>карпа обыкновенного (Cyprinus carpio). Кохаку -<br>белые кои с рисунком красного цвета, один из самых<br>красивых и популярных видов кои.</div>
<span class="ls" style="left:490.6px;top:432.7px;font-size:6.4px;line-height:8px;font-weight:700;color:#1414c4;text-decoration:underline;">Горячие клавиши</span>
<svg style="left:494px;top:186px" width="168" height="92" viewBox="494 186 168 92">
<defs>
<linearGradient id="fb" x1="0" y1="0" x2="0" y2="1"><stop offset="0" stop-color="#a9a9a9"/><stop offset=".3" stop-color="#dedede"/><stop offset=".65" stop-color="#f3f3f3"/><stop offset="1" stop-color="#bdbdbd"/></linearGradient>
<linearGradient id="fr" x1="0" y1="0" x2="0" y2="1"><stop offset="0" stop-color="#a40e08"/><stop offset=".35" stop-color="#d4260c"/><stop offset=".75" stop-color="#ee5a14"/><stop offset="1" stop-color="#f59122"/></linearGradient>
<linearGradient id="fh" x1="0" y1="0" x2="0" y2="1"><stop offset="0" stop-color="#8c0c06"/><stop offset=".6" stop-color="#c8200c"/><stop offset="1" stop-color="#de3a10"/></linearGradient><linearGradient id="fsn" x1="0" y1="0" x2="1" y2="0"><stop offset="0" stop-color="#8e8e8e" stop-opacity=".75"/><stop offset="1" stop-color="#8e8e8e" stop-opacity="0"/></linearGradient><linearGradient id="ftop" x1="0" y1="0" x2="0" y2="1"><stop offset="0" stop-color="#3a3a3a" stop-opacity=".5"/><stop offset=".28" stop-color="#5a5a5a" stop-opacity=".12"/><stop offset=".5" stop-color="#5a5a5a" stop-opacity="0"/></linearGradient>
<linearGradient id="ff" x1="0" y1="0" x2="1" y2="1"><stop offset="0" stop-color="#a0a0a0"/><stop offset=".5" stop-color="#e2e2e2"/><stop offset="1" stop-color="#b0b0b0"/></linearGradient>
<clipPath id="bodyclip"><path d="M499.6,240.4 C500,237 503,233.6 507.6,231.6 C512,226 516,221 522,217.2 C528,211.6 534,207.6 541.2,205.2 C546,203.2 552,202 557.2,202.4 C567,202.6 577,205.4 586,209.2 C594,212.4 602,216.4 608.4,219.6 C614,222 620,223.6 626.4,224.2 C627.6,229.6 626,236 622.8,241.4 C616,243.4 609,246.4 602,249.2 C595,251.4 587,252.6 579.6,253.2 C572,254.6 565,255.8 558.8,255.6 C551,255.6 544,255 538,254 C532,253.4 527,252.4 522,250.8 C517,250.6 512,249.8 507.6,248.4 C505,247.6 503,246.6 502,245.2 C500.4,244 499.4,242.2 499.6,240.4Z"/></clipPath>
<clipPath id="tailclip"><path d="M624,223.6 C630,221.6 637,218 642.8,216.2 C648,215 653,215.4 655.6,216.6 C657,220 654,225 650.6,229 C648.6,231.4 646,233.4 644.4,234.8 C648,238 652,243 652.6,247.6 C652.2,251.4 649,253.4 646,253 C640,252 633,248 628,245 C626,243.8 623.6,242.4 621.6,241.6Z"/></clipPath>
<clipPath id="dorsclip"><path d="M556,202.6 C560,198 565,193 570,190.8 C572.4,189.8 575,189.6 576.6,190.2 C577.6,192 578,194.6 579.6,196.4 C586,200.6 595,203.6 602,206.8 C608,209.6 613,211.6 616.4,214 C618.2,216 618.6,218.6 618,220.6 C610,218.4 600,214 590,210 C578,205.6 566,202.6 556,202.6Z"/></clipPath>
<clipPath id="analclip"><path d="M599.6,246 C605,245 611,244.2 617.2,244.4 C617.6,249 616.4,255 614,259.6 C608,258 602,254.6 598.4,251.4Z"/></clipPath>
<clipPath id="pelvclip"><path d="M559.6,255.4 C565,255.6 571,255.2 577.2,254.6 C577.4,260 575.6,266.6 573,271.6 C570.6,270.6 568.4,268.6 566.8,266.6 C564,263 561.4,259 559.6,255.4Z"/></clipPath>
</defs>
<path d="M624,223.6 C630,221.6 637,218 642.8,216.2 C648,215 653,215.4 655.6,216.6 C657,220 654,225 650.6,229 C648.6,231.4 646,233.4 644.4,234.8 C648,238 652,243 652.6,247.6 C652.2,251.4 649,253.4 646,253 C640,252 633,248 628,245 C626,243.8 623.6,242.4 621.6,241.6Z" fill="url(#ff)" stroke="#666" stroke-width=".55"/>
<path d="M619.1,229.9 L654.8,211.7 M619.3,230.1 L655.6,213.3 M619.4,230.4 L656.3,215.0 M619.5,230.7 L657.0,216.7 M619.6,231.0 L657.6,218.4 M619.7,231.3 L658.1,220.1 M619.8,231.6 L658.6,221.9 M619.8,231.9 L659.0,223.6 M619.9,232.1 L659.3,225.4 M619.9,232.4 L659.6,227.2 M620.0,232.7 L659.8,229.0 M620.0,233.0 L659.9,230.8 M620.0,233.3 L660.0,232.6 M620.0,233.7 L660.0,234.4 M620.0,234.0 L659.9,236.2 M620.0,234.3 L659.8,238.0 M619.9,234.6 L659.6,239.8 M619.9,234.9 L659.3,241.6 M619.8,235.1 L659.0,243.4 M619.8,235.4 L658.6,245.1 M619.7,235.7 L658.1,246.9 M619.6,236.0 L657.6,248.6 M619.5,236.3 L657.0,250.3 M619.4,236.6 L656.3,252.0 M619.3,236.9 L655.6,253.7 M619.1,237.1 L654.8,255.3" clip-path="url(#tailclip)" stroke="#484848" stroke-width=".5" opacity=".8" fill="none"/>
<path d="M556,202.6 C560,198 565,193 570,190.8 C572.4,189.8 575,189.6 576.6,190.2 C577.6,192 578,194.6 579.6,196.4 C586,200.6 595,203.6 602,206.8 C608,209.6 613,211.6 616.4,214 C618.2,216 618.6,218.6 618,220.6 C610,218.4 600,214 590,210 C578,205.6 566,202.6 556,202.6Z" fill="url(#ff)" stroke="#666" stroke-width=".55"/>
<path d="M556.0,203.6 L563.5,188.5 M558.1,203.8 L565.9,188.8 M560.3,204.2 L568.3,189.3 M562.4,204.5 L570.7,189.9 M564.6,205.0 L573.1,190.5 M566.7,205.4 L575.5,191.1 M568.8,205.9 L577.9,191.8 M571.0,206.4 L580.3,192.4 M573.1,207.0 L582.7,193.2 M575.2,207.5 L585.1,193.9 M577.4,208.1 L587.5,194.7 M579.5,208.7 L589.8,195.5 M581.7,209.3 L592.2,196.3 M583.8,209.9 L594.6,197.1 M585.9,210.6 L596.9,198.0 M588.1,211.2 L599.3,198.8 M590.2,211.9 L601.6,199.7 M592.3,212.6 L604.0,200.6 M594.5,213.3 L606.3,201.5 M596.6,214.0 L608.7,202.5 M598.8,214.7 L611.0,203.4 M600.9,215.4 L613.4,204.4 M603.0,216.2 L615.7,205.4 M605.2,216.9 L618.0,206.4 M607.3,217.7 L620.3,207.4 M609.4,218.4 L622.6,208.4 M611.6,219.2 L625.0,209.4 M613.7,220.0 L627.3,210.5 M615.9,220.8 L629.6,211.5 M618.0,221.6 L631.9,212.6" clip-path="url(#dorsclip)" stroke="#484848" stroke-width=".5" opacity=".8" fill="none"/>
<path d="M599.6,246 C605,245 611,244.2 617.2,244.4 C617.6,249 616.4,255 614,259.6 C608,258 602,254.6 598.4,251.4Z" fill="url(#ff)" stroke="#666" stroke-width=".55"/>
<path d="M604.9,243.7 L621.8,249.8 M604.8,243.9 L620.8,252.0 M604.7,244.1 L619.7,254.1 M604.5,244.3 L618.2,256.0 M604.4,244.5 L616.6,257.7 M604.2,244.6 L614.7,259.2 M604.0,244.7 L612.7,260.5 M603.8,244.9 L610.6,261.5 M603.5,244.9 L608.3,262.3 M603.3,245.0 L606.0,262.8 M603.1,245.0 L603.6,263.0 M602.8,245.0 L601.3,262.9" clip-path="url(#analclip)" stroke="#484848" stroke-width=".5" opacity=".8" fill="none"/>
<path d="M559.6,255.4 C565,255.6 571,255.2 577.2,254.6 C577.4,260 575.6,266.6 573,271.6 C570.6,270.6 568.4,268.6 566.8,266.6 C564,263 561.4,259 559.6,255.4Z" fill="url(#ff)" stroke="#666" stroke-width=".55"/>
<path d="M565.6,253.1 L582.0,264.6 M565.5,253.3 L580.6,266.4 M565.4,253.5 L579.1,268.0 M565.2,253.6 L577.3,269.5 M565.0,253.7 L575.5,270.8 M564.9,253.8 L573.5,271.9 M564.7,253.9 L571.4,272.7 M564.5,253.9 L569.2,273.4 M564.3,254.0 L567.0,273.8 M564.1,254.0 L564.7,274.0 M563.9,254.0 L562.4,273.9 M563.7,254.0 L560.2,273.7" clip-path="url(#pelvclip)" stroke="#484848" stroke-width=".5" opacity=".8" fill="none"/>
<path d="M499.6,240.4 C500,237 503,233.6 507.6,231.6 C512,226 516,221 522,217.2 C528,211.6 534,207.6 541.2,205.2 C546,203.2 552,202 557.2,202.4 C567,202.6 577,205.4 586,209.2 C594,212.4 602,216.4 608.4,219.6 C614,222 620,223.6 626.4,224.2 C627.6,229.6 626,236 622.8,241.4 C616,243.4 609,246.4 602,249.2 C595,251.4 587,252.6 579.6,253.2 C572,254.6 565,255.8 558.8,255.6 C551,255.6 544,255 538,254 C532,253.4 527,252.4 522,250.8 C517,250.6 512,249.8 507.6,248.4 C505,247.6 503,246.6 502,245.2 C500.4,244 499.4,242.2 499.6,240.4Z" fill="url(#fb)"/>
<g clip-path="url(#bodyclip)">
<path d="M506,234 L507.6,229 L522,215 L541.6,203 L542.4,207 C541,213 540,220 538,225.4 C535,226 531,224.4 527.6,223.6 C525.6,224.6 524.6,226.6 523.6,227.8 C520,228.2 517,229.2 514,230.2 C511,231.4 508.6,232.6 506,234Z" fill="url(#fh)"/>
<path d="M552,200 L586.8,207.6 L587,210.4 C584,213 582,217 581.2,220.4 C581.4,223.6 582.6,226.4 582.8,229.2 C580.6,232.6 577.6,235.6 574.8,238 C571,239 567,238.8 563.6,238 C562,235.6 561,232.8 561.2,230 C562.4,227.6 563.6,224.8 563.6,222 C561.6,220.8 559.4,219.2 558,217.2 C557,214.6 557,211.8 557.2,209.2 C555.4,207.4 553.4,205.6 552.4,203.6Z" fill="url(#fr)"/>
<path d="M588.4,208 L607,217 L606.4,220 C605.6,222.8 604.8,225.8 603.6,228.4 C600.6,229.8 597,230.4 594,231.6 C592,233.6 590.6,236 589.2,238 C585.4,240.4 581.2,242.4 577.2,243.6 C576.4,241.8 576,239.8 576.4,238 C579.2,235.6 582,233 584.4,230 C584.4,227 583,224 582,221.2 C583,217.4 585.4,213.4 588.4,210Z" fill="url(#fr)"/>
<path d="M606.8,220 L627.4,222.6 L627.4,229.6 C624.4,229.6 621,229.2 618,228.4 C615.6,230.4 613.6,232.8 611.6,234.8 C610.6,232.8 610,230.4 610,228.4 C608.6,226.4 607.4,223.6 606.8,222Z" fill="url(#fh)"/>
<path d="M528.0,203.3 q1.7,1.7 0,3.4 M531.8,203.3 q1.7,1.7 0,3.4 M535.6,203.3 q1.7,1.7 0,3.4 M539.4,203.3 q1.7,1.7 0,3.4 M543.2,203.3 q1.7,1.7 0,3.4 M547.0,203.3 q1.7,1.7 0,3.4 M550.8,203.3 q1.7,1.7 0,3.4 M554.6,203.3 q1.7,1.7 0,3.4 M558.4,203.3 q1.7,1.7 0,3.4 M562.2,203.3 q1.7,1.7 0,3.4 M566.0,203.3 q1.7,1.7 0,3.4 M569.8,203.3 q1.7,1.7 0,3.4 M573.6,203.3 q1.7,1.7 0,3.4 M577.4,203.3 q1.7,1.7 0,3.4 M581.2,203.3 q1.7,1.7 0,3.4 M585.0,203.3 q1.7,1.7 0,3.4 M588.8,203.3 q1.7,1.7 0,3.4 M592.6,203.3 q1.7,1.7 0,3.4 M596.4,203.3 q1.7,1.7 0,3.4 M600.2,203.3 q1.7,1.7 0,3.4 M604.0,203.3 q1.7,1.7 0,3.4 M607.8,203.3 q1.7,1.7 0,3.4 M611.6,203.3 q1.7,1.7 0,3.4 M615.4,203.3 q1.7,1.7 0,3.4 M619.2,203.3 q1.7,1.7 0,3.4 M623.0,203.3 q1.7,1.7 0,3.4 M626.8,203.3 q1.7,1.7 0,3.4 M529.9,206.5 q1.7,1.7 0,3.4 M533.7,206.5 q1.7,1.7 0,3.4 M537.5,206.5 q1.7,1.7 0,3.4 M541.3,206.5 q1.7,1.7 0,3.4 M545.1,206.5 q1.7,1.7 0,3.4 M548.9,206.5 q1.7,1.7 0,3.4 M552.7,206.5 q1.7,1.7 0,3.4 M556.5,206.5 q1.7,1.7 0,3.4 M560.3,206.5 q1.7,1.7 0,3.4 M564.1,206.5 q1.7,1.7 0,3.4 M567.9,206.5 q1.7,1.7 0,3.4 M571.7,206.5 q1.7,1.7 0,3.4 M575.5,206.5 q1.7,1.7 0,3.4 M579.3,206.5 q1.7,1.7 0,3.4 M583.1,206.5 q1.7,1.7 0,3.4 M586.9,206.5 q1.7,1.7 0,3.4 M590.7,206.5 q1.7,1.7 0,3.4 M594.5,206.5 q1.7,1.7 0,3.4 M598.3,206.5 q1.7,1.7 0,3.4 M602.1,206.5 q1.7,1.7 0,3.4 M605.9,206.5 q1.7,1.7 0,3.4 M609.7,206.5 q1.7,1.7 0,3.4 M613.5,206.5 q1.7,1.7 0,3.4 M617.3,206.5 q1.7,1.7 0,3.4 M621.1,206.5 q1.7,1.7 0,3.4 M624.9,206.5 q1.7,1.7 0,3.4 M528.0,209.7 q1.7,1.7 0,3.4 M531.8,209.7 q1.7,1.7 0,3.4 M535.6,209.7 q1.7,1.7 0,3.4 M539.4,209.7 q1.7,1.7 0,3.4 M543.2,209.7 q1.7,1.7 0,3.4 M547.0,209.7 q1.7,1.7 0,3.4 M550.8,209.7 q1.7,1.7 0,3.4 M554.6,209.7 q1.7,1.7 0,3.4 M558.4,209.7 q1.7,1.7 0,3.4 M562.2,209.7 q1.7,1.7 0,3.4 M566.0,209.7 q1.7,1.7 0,3.4 M569.8,209.7 q1.7,1.7 0,3.4 M573.6,209.7 q1.7,1.7 0,3.4 M577.4,209.7 q1.7,1.7 0,3.4 M581.2,209.7 q1.7,1.7 0,3.4 M585.0,209.7 q1.7,1.7 0,3.4 M588.8,209.7 q1.7,1.7 0,3.4 M592.6,209.7 q1.7,1.7 0,3.4 M596.4,209.7 q1.7,1.7 0,3.4 M600.2,209.7 q1.7,1.7 0,3.4 M604.0,209.7 q1.7,1.7 0,3.4 M607.8,209.7 q1.7,1.7 0,3.4 M611.6,209.7 q1.7,1.7 0,3.4 M615.4,209.7 q1.7,1.7 0,3.4 M619.2,209.7 q1.7,1.7 0,3.4 M623.0,209.7 q1.7,1.7 0,3.4 M626.8,209.7 q1.7,1.7 0,3.4 M529.9,212.9 q1.7,1.7 0,3.4 M533.7,212.9 q1.7,1.7 0,3.4 M537.5,212.9 q1.7,1.7 0,3.4 M541.3,212.9 q1.7,1.7 0,3.4 M545.1,212.9 q1.7,1.7 0,3.4 M548.9,212.9 q1.7,1.7 0,3.4 M552.7,212.9 q1.7,1.7 0,3.4 M556.5,212.9 q1.7,1.7 0,3.4 M560.3,212.9 q1.7,1.7 0,3.4 M564.1,212.9 q1.7,1.7 0,3.4 M567.9,212.9 q1.7,1.7 0,3.4 M571.7,212.9 q1.7,1.7 0,3.4 M575.5,212.9 q1.7,1.7 0,3.4 M579.3,212.9 q1.7,1.7 0,3.4 M583.1,212.9 q1.7,1.7 0,3.4 M586.9,212.9 q1.7,1.7 0,3.4 M590.7,212.9 q1.7,1.7 0,3.4 M594.5,212.9 q1.7,1.7 0,3.4 M598.3,212.9 q1.7,1.7 0,3.4 M602.1,212.9 q1.7,1.7 0,3.4 M605.9,212.9 q1.7,1.7 0,3.4 M609.7,212.9 q1.7,1.7 0,3.4 M613.5,212.9 q1.7,1.7 0,3.4 M617.3,212.9 q1.7,1.7 0,3.4 M621.1,212.9 q1.7,1.7 0,3.4 M624.9,212.9 q1.7,1.7 0,3.4 M528.0,216.1 q1.7,1.7 0,3.4 M531.8,216.1 q1.7,1.7 0,3.4 M535.6,216.1 q1.7,1.7 0,3.4 M539.4,216.1 q1.7,1.7 0,3.4 M543.2,216.1 q1.7,1.7 0,3.4 M547.0,216.1 q1.7,1.7 0,3.4 M550.8,216.1 q1.7,1.7 0,3.4 M554.6,216.1 q1.7,1.7 0,3.4 M558.4,216.1 q1.7,1.7 0,3.4 M562.2,216.1 q1.7,1.7 0,3.4 M566.0,216.1 q1.7,1.7 0,3.4 M569.8,216.1 q1.7,1.7 0,3.4 M573.6,216.1 q1.7,1.7 0,3.4 M577.4,216.1 q1.7,1.7 0,3.4 M581.2,216.1 q1.7,1.7 0,3.4 M585.0,216.1 q1.7,1.7 0,3.4 M588.8,216.1 q1.7,1.7 0,3.4 M592.6,216.1 q1.7,1.7 0,3.4 M596.4,216.1 q1.7,1.7 0,3.4 M600.2,216.1 q1.7,1.7 0,3.4 M604.0,216.1 q1.7,1.7 0,3.4 M607.8,216.1 q1.7,1.7 0,3.4 M611.6,216.1 q1.7,1.7 0,3.4 M615.4,216.1 q1.7,1.7 0,3.4 M619.2,216.1 q1.7,1.7 0,3.4 M623.0,216.1 q1.7,1.7 0,3.4 M626.8,216.1 q1.7,1.7 0,3.4 M529.9,219.3 q1.7,1.7 0,3.4 M533.7,219.3 q1.7,1.7 0,3.4 M537.5,219.3 q1.7,1.7 0,3.4 M541.3,219.3 q1.7,1.7 0,3.4 M545.1,219.3 q1.7,1.7 0,3.4 M548.9,219.3 q1.7,1.7 0,3.4 M552.7,219.3 q1.7,1.7 0,3.4 M556.5,219.3 q1.7,1.7 0,3.4 M560.3,219.3 q1.7,1.7 0,3.4 M564.1,219.3 q1.7,1.7 0,3.4 M567.9,219.3 q1.7,1.7 0,3.4 M571.7,219.3 q1.7,1.7 0,3.4 M575.5,219.3 q1.7,1.7 0,3.4 M579.3,219.3 q1.7,1.7 0,3.4 M583.1,219.3 q1.7,1.7 0,3.4 M586.9,219.3 q1.7,1.7 0,3.4 M590.7,219.3 q1.7,1.7 0,3.4 M594.5,219.3 q1.7,1.7 0,3.4 M598.3,219.3 q1.7,1.7 0,3.4 M602.1,219.3 q1.7,1.7 0,3.4 M605.9,219.3 q1.7,1.7 0,3.4 M609.7,219.3 q1.7,1.7 0,3.4 M613.5,219.3 q1.7,1.7 0,3.4 M617.3,219.3 q1.7,1.7 0,3.4 M621.1,219.3 q1.7,1.7 0,3.4 M624.9,219.3 q1.7,1.7 0,3.4 M528.0,222.5 q1.7,1.7 0,3.4 M531.8,222.5 q1.7,1.7 0,3.4 M535.6,222.5 q1.7,1.7 0,3.4 M539.4,222.5 q1.7,1.7 0,3.4 M543.2,222.5 q1.7,1.7 0,3.4 M547.0,222.5 q1.7,1.7 0,3.4 M550.8,222.5 q1.7,1.7 0,3.4 M554.6,222.5 q1.7,1.7 0,3.4 M558.4,222.5 q1.7,1.7 0,3.4 M562.2,222.5 q1.7,1.7 0,3.4 M566.0,222.5 q1.7,1.7 0,3.4 M569.8,222.5 q1.7,1.7 0,3.4 M573.6,222.5 q1.7,1.7 0,3.4 M577.4,222.5 q1.7,1.7 0,3.4 M581.2,222.5 q1.7,1.7 0,3.4 M585.0,222.5 q1.7,1.7 0,3.4 M588.8,222.5 q1.7,1.7 0,3.4 M592.6,222.5 q1.7,1.7 0,3.4 M596.4,222.5 q1.7,1.7 0,3.4 M600.2,222.5 q1.7,1.7 0,3.4 M604.0,222.5 q1.7,1.7 0,3.4 M607.8,222.5 q1.7,1.7 0,3.4 M611.6,222.5 q1.7,1.7 0,3.4 M615.4,222.5 q1.7,1.7 0,3.4 M619.2,222.5 q1.7,1.7 0,3.4 M623.0,222.5 q1.7,1.7 0,3.4 M626.8,222.5 q1.7,1.7 0,3.4 M529.9,225.7 q1.7,1.7 0,3.4 M533.7,225.7 q1.7,1.7 0,3.4 M537.5,225.7 q1.7,1.7 0,3.4 M541.3,225.7 q1.7,1.7 0,3.4 M545.1,225.7 q1.7,1.7 0,3.4 M548.9,225.7 q1.7,1.7 0,3.4 M552.7,225.7 q1.7,1.7 0,3.4 M556.5,225.7 q1.7,1.7 0,3.4 M560.3,225.7 q1.7,1.7 0,3.4 M564.1,225.7 q1.7,1.7 0,3.4 M567.9,225.7 q1.7,1.7 0,3.4 M571.7,225.7 q1.7,1.7 0,3.4 M575.5,225.7 q1.7,1.7 0,3.4 M579.3,225.7 q1.7,1.7 0,3.4 M583.1,225.7 q1.7,1.7 0,3.4 M586.9,225.7 q1.7,1.7 0,3.4 M590.7,225.7 q1.7,1.7 0,3.4 M594.5,225.7 q1.7,1.7 0,3.4 M598.3,225.7 q1.7,1.7 0,3.4 M602.1,225.7 q1.7,1.7 0,3.4 M605.9,225.7 q1.7,1.7 0,3.4 M609.7,225.7 q1.7,1.7 0,3.4 M613.5,225.7 q1.7,1.7 0,3.4 M617.3,225.7 q1.7,1.7 0,3.4 M621.1,225.7 q1.7,1.7 0,3.4 M624.9,225.7 q1.7,1.7 0,3.4 M528.0,228.9 q1.7,1.7 0,3.4 M531.8,228.9 q1.7,1.7 0,3.4 M535.6,228.9 q1.7,1.7 0,3.4 M539.4,228.9 q1.7,1.7 0,3.4 M543.2,228.9 q1.7,1.7 0,3.4 M547.0,228.9 q1.7,1.7 0,3.4 M550.8,228.9 q1.7,1.7 0,3.4 M554.6,228.9 q1.7,1.7 0,3.4 M558.4,228.9 q1.7,1.7 0,3.4 M562.2,228.9 q1.7,1.7 0,3.4 M566.0,228.9 q1.7,1.7 0,3.4 M569.8,228.9 q1.7,1.7 0,3.4 M573.6,228.9 q1.7,1.7 0,3.4 M577.4,228.9 q1.7,1.7 0,3.4 M581.2,228.9 q1.7,1.7 0,3.4 M585.0,228.9 q1.7,1.7 0,3.4 M588.8,228.9 q1.7,1.7 0,3.4 M592.6,228.9 q1.7,1.7 0,3.4 M596.4,228.9 q1.7,1.7 0,3.4 M600.2,228.9 q1.7,1.7 0,3.4 M604.0,228.9 q1.7,1.7 0,3.4 M607.8,228.9 q1.7,1.7 0,3.4 M611.6,228.9 q1.7,1.7 0,3.4 M615.4,228.9 q1.7,1.7 0,3.4 M619.2,228.9 q1.7,1.7 0,3.4 M623.0,228.9 q1.7,1.7 0,3.4 M626.8,228.9 q1.7,1.7 0,3.4 M529.9,232.1 q1.7,1.7 0,3.4 M533.7,232.1 q1.7,1.7 0,3.4 M537.5,232.1 q1.7,1.7 0,3.4 M541.3,232.1 q1.7,1.7 0,3.4 M545.1,232.1 q1.7,1.7 0,3.4 M548.9,232.1 q1.7,1.7 0,3.4 M552.7,232.1 q1.7,1.7 0,3.4 M556.5,232.1 q1.7,1.7 0,3.4 M560.3,232.1 q1.7,1.7 0,3.4 M564.1,232.1 q1.7,1.7 0,3.4 M567.9,232.1 q1.7,1.7 0,3.4 M571.7,232.1 q1.7,1.7 0,3.4 M575.5,232.1 q1.7,1.7 0,3.4 M579.3,232.1 q1.7,1.7 0,3.4 M583.1,232.1 q1.7,1.7 0,3.4 M586.9,232.1 q1.7,1.7 0,3.4 M590.7,232.1 q1.7,1.7 0,3.4 M594.5,232.1 q1.7,1.7 0,3.4 M598.3,232.1 q1.7,1.7 0,3.4 M602.1,232.1 q1.7,1.7 0,3.4 M605.9,232.1 q1.7,1.7 0,3.4 M609.7,232.1 q1.7,1.7 0,3.4 M613.5,232.1 q1.7,1.7 0,3.4 M617.3,232.1 q1.7,1.7 0,3.4 M621.1,232.1 q1.7,1.7 0,3.4 M624.9,232.1 q1.7,1.7 0,3.4 M528.0,235.3 q1.7,1.7 0,3.4 M531.8,235.3 q1.7,1.7 0,3.4 M535.6,235.3 q1.7,1.7 0,3.4 M539.4,235.3 q1.7,1.7 0,3.4 M543.2,235.3 q1.7,1.7 0,3.4 M547.0,235.3 q1.7,1.7 0,3.4 M550.8,235.3 q1.7,1.7 0,3.4 M554.6,235.3 q1.7,1.7 0,3.4 M558.4,235.3 q1.7,1.7 0,3.4 M562.2,235.3 q1.7,1.7 0,3.4 M566.0,235.3 q1.7,1.7 0,3.4 M569.8,235.3 q1.7,1.7 0,3.4 M573.6,235.3 q1.7,1.7 0,3.4 M577.4,235.3 q1.7,1.7 0,3.4 M581.2,235.3 q1.7,1.7 0,3.4 M585.0,235.3 q1.7,1.7 0,3.4 M588.8,235.3 q1.7,1.7 0,3.4 M592.6,235.3 q1.7,1.7 0,3.4 M596.4,235.3 q1.7,1.7 0,3.4 M600.2,235.3 q1.7,1.7 0,3.4 M604.0,235.3 q1.7,1.7 0,3.4 M607.8,235.3 q1.7,1.7 0,3.4 M611.6,235.3 q1.7,1.7 0,3.4 M615.4,235.3 q1.7,1.7 0,3.4 M619.2,235.3 q1.7,1.7 0,3.4 M623.0,235.3 q1.7,1.7 0,3.4 M626.8,235.3 q1.7,1.7 0,3.4 M529.9,238.5 q1.7,1.7 0,3.4 M533.7,238.5 q1.7,1.7 0,3.4 M537.5,238.5 q1.7,1.7 0,3.4 M541.3,238.5 q1.7,1.7 0,3.4 M545.1,238.5 q1.7,1.7 0,3.4 M548.9,238.5 q1.7,1.7 0,3.4 M552.7,238.5 q1.7,1.7 0,3.4 M556.5,238.5 q1.7,1.7 0,3.4 M560.3,238.5 q1.7,1.7 0,3.4 M564.1,238.5 q1.7,1.7 0,3.4 M567.9,238.5 q1.7,1.7 0,3.4 M571.7,238.5 q1.7,1.7 0,3.4 M575.5,238.5 q1.7,1.7 0,3.4 M579.3,238.5 q1.7,1.7 0,3.4 M583.1,238.5 q1.7,1.7 0,3.4 M586.9,238.5 q1.7,1.7 0,3.4 M590.7,238.5 q1.7,1.7 0,3.4 M594.5,238.5 q1.7,1.7 0,3.4 M598.3,238.5 q1.7,1.7 0,3.4 M602.1,238.5 q1.7,1.7 0,3.4 M605.9,238.5 q1.7,1.7 0,3.4 M609.7,238.5 q1.7,1.7 0,3.4 M613.5,238.5 q1.7,1.7 0,3.4 M617.3,238.5 q1.7,1.7 0,3.4 M621.1,238.5 q1.7,1.7 0,3.4 M624.9,238.5 q1.7,1.7 0,3.4 M528.0,241.7 q1.7,1.7 0,3.4 M531.8,241.7 q1.7,1.7 0,3.4 M535.6,241.7 q1.7,1.7 0,3.4 M539.4,241.7 q1.7,1.7 0,3.4 M543.2,241.7 q1.7,1.7 0,3.4 M547.0,241.7 q1.7,1.7 0,3.4 M550.8,241.7 q1.7,1.7 0,3.4 M554.6,241.7 q1.7,1.7 0,3.4 M558.4,241.7 q1.7,1.7 0,3.4 M562.2,241.7 q1.7,1.7 0,3.4 M566.0,241.7 q1.7,1.7 0,3.4 M569.8,241.7 q1.7,1.7 0,3.4 M573.6,241.7 q1.7,1.7 0,3.4 M577.4,241.7 q1.7,1.7 0,3.4 M581.2,241.7 q1.7,1.7 0,3.4 M585.0,241.7 q1.7,1.7 0,3.4 M588.8,241.7 q1.7,1.7 0,3.4 M592.6,241.7 q1.7,1.7 0,3.4 M596.4,241.7 q1.7,1.7 0,3.4 M600.2,241.7 q1.7,1.7 0,3.4 M604.0,241.7 q1.7,1.7 0,3.4 M607.8,241.7 q1.7,1.7 0,3.4 M611.6,241.7 q1.7,1.7 0,3.4 M615.4,241.7 q1.7,1.7 0,3.4 M619.2,241.7 q1.7,1.7 0,3.4 M623.0,241.7 q1.7,1.7 0,3.4 M626.8,241.7 q1.7,1.7 0,3.4 M529.9,244.9 q1.7,1.7 0,3.4 M533.7,244.9 q1.7,1.7 0,3.4 M537.5,244.9 q1.7,1.7 0,3.4 M541.3,244.9 q1.7,1.7 0,3.4 M545.1,244.9 q1.7,1.7 0,3.4 M548.9,244.9 q1.7,1.7 0,3.4 M552.7,244.9 q1.7,1.7 0,3.4 M556.5,244.9 q1.7,1.7 0,3.4 M560.3,244.9 q1.7,1.7 0,3.4 M564.1,244.9 q1.7,1.7 0,3.4 M567.9,244.9 q1.7,1.7 0,3.4 M571.7,244.9 q1.7,1.7 0,3.4 M575.5,244.9 q1.7,1.7 0,3.4 M579.3,244.9 q1.7,1.7 0,3.4 M583.1,244.9 q1.7,1.7 0,3.4 M586.9,244.9 q1.7,1.7 0,3.4 M590.7,244.9 q1.7,1.7 0,3.4 M594.5,244.9 q1.7,1.7 0,3.4 M598.3,244.9 q1.7,1.7 0,3.4 M602.1,244.9 q1.7,1.7 0,3.4 M605.9,244.9 q1.7,1.7 0,3.4 M609.7,244.9 q1.7,1.7 0,3.4 M613.5,244.9 q1.7,1.7 0,3.4 M617.3,244.9 q1.7,1.7 0,3.4 M621.1,244.9 q1.7,1.7 0,3.4 M624.9,244.9 q1.7,1.7 0,3.4 M528.0,248.1 q1.7,1.7 0,3.4 M531.8,248.1 q1.7,1.7 0,3.4 M535.6,248.1 q1.7,1.7 0,3.4 M539.4,248.1 q1.7,1.7 0,3.4 M543.2,248.1 q1.7,1.7 0,3.4 M547.0,248.1 q1.7,1.7 0,3.4 M550.8,248.1 q1.7,1.7 0,3.4 M554.6,248.1 q1.7,1.7 0,3.4 M558.4,248.1 q1.7,1.7 0,3.4 M562.2,248.1 q1.7,1.7 0,3.4 M566.0,248.1 q1.7,1.7 0,3.4 M569.8,248.1 q1.7,1.7 0,3.4 M573.6,248.1 q1.7,1.7 0,3.4 M577.4,248.1 q1.7,1.7 0,3.4 M581.2,248.1 q1.7,1.7 0,3.4 M585.0,248.1 q1.7,1.7 0,3.4 M588.8,248.1 q1.7,1.7 0,3.4 M592.6,248.1 q1.7,1.7 0,3.4 M596.4,248.1 q1.7,1.7 0,3.4 M600.2,248.1 q1.7,1.7 0,3.4 M604.0,248.1 q1.7,1.7 0,3.4 M607.8,248.1 q1.7,1.7 0,3.4 M611.6,248.1 q1.7,1.7 0,3.4 M615.4,248.1 q1.7,1.7 0,3.4 M619.2,248.1 q1.7,1.7 0,3.4 M623.0,248.1 q1.7,1.7 0,3.4 M626.8,248.1 q1.7,1.7 0,3.4 M529.9,251.3 q1.7,1.7 0,3.4 M533.7,251.3 q1.7,1.7 0,3.4 M537.5,251.3 q1.7,1.7 0,3.4 M541.3,251.3 q1.7,1.7 0,3.4 M545.1,251.3 q1.7,1.7 0,3.4 M548.9,251.3 q1.7,1.7 0,3.4 M552.7,251.3 q1.7,1.7 0,3.4 M556.5,251.3 q1.7,1.7 0,3.4 M560.3,251.3 q1.7,1.7 0,3.4 M564.1,251.3 q1.7,1.7 0,3.4 M567.9,251.3 q1.7,1.7 0,3.4 M571.7,251.3 q1.7,1.7 0,3.4 M575.5,251.3 q1.7,1.7 0,3.4 M579.3,251.3 q1.7,1.7 0,3.4 M583.1,251.3 q1.7,1.7 0,3.4 M586.9,251.3 q1.7,1.7 0,3.4 M590.7,251.3 q1.7,1.7 0,3.4 M594.5,251.3 q1.7,1.7 0,3.4 M598.3,251.3 q1.7,1.7 0,3.4 M602.1,251.3 q1.7,1.7 0,3.4 M605.9,251.3 q1.7,1.7 0,3.4 M609.7,251.3 q1.7,1.7 0,3.4 M613.5,251.3 q1.7,1.7 0,3.4 M617.3,251.3 q1.7,1.7 0,3.4 M621.1,251.3 q1.7,1.7 0,3.4 M624.9,251.3 q1.7,1.7 0,3.4" fill="none" stroke="#3c3c3c" stroke-width=".36" opacity=".6"/>
<path d="M538,225 C543,233 543,245 536,254" fill="none" stroke="#7a7a7a" stroke-width="1.3" opacity=".75"/>
<path d="M527.6,224 C535,228 538,240 532,250 C528,254 518,253 512,249" fill="none" stroke="#8c8c8c" stroke-width="1" opacity=".85"/>
<path d="M524,228 C530,231 532,240 527,247" fill="none" stroke="#a8a8a8" stroke-width=".8" opacity=".8"/>
<ellipse cx="520" cy="239" rx="8" ry="7" fill="#f2f2f2" opacity=".75"/><rect x="499" y="228" width="14" height="24" fill="url(#fsn)"/><rect x="499" y="200" width="130" height="58" fill="url(#ftop)"/>
<path d="M499,244 C505,250 520,254 540,255 C570,258 600,252 623,242 L623,260 L499,260Z" fill="#8a8a8a" opacity=".35"/>
<path d="M507.6,231.6 C512,226 516,221 522,217.2 C528,211.6 534,207.6 541.2,205.2 C546,203.2 552,202 557.2,202.4 C567,202.6 577,205.4 586,209.2 C594,212.4 602,216.4 608.4,219.6 C614,222 620,223.6 626.4,224.2" fill="none" stroke="#3a1a12" stroke-width="1.5" opacity=".55"/>
</g>
<path d="M546,248 C551,247 557,247.6 561.2,249.6 C560,252.6 555,254.4 549,254 C547,252.6 546,250.4 546,248Z" fill="#dcdcdc" stroke="#8a8a8a" stroke-width=".5"/>
<circle cx="518.8" cy="235.4" r="3.7" fill="#f4f4f4" stroke="#8e8e8e" stroke-width=".7"/>
<circle cx="518.6" cy="235.4" r="1.5" fill="#222"/>
<path d="M500,242 C502,243.6 504,244.6 506,245 M507.6,245.6 L508.2,251" fill="none" stroke="#666" stroke-width=".7"/>
<path d="M499.6,240.4 C500,237 503,233.6 507.6,231.6 C512,226 516,221 522,217.2 C528,211.6 534,207.6 541.2,205.2 C546,203.2 552,202 557.2,202.4 C567,202.6 577,205.4 586,209.2 C594,212.4 602,216.4 608.4,219.6 C614,222 620,223.6 626.4,224.2 C627.6,229.6 626,236 622.8,241.4 C616,243.4 609,246.4 602,249.2 C595,251.4 587,252.6 579.6,253.2 C572,254.6 565,255.8 558.8,255.6 C551,255.6 544,255 538,254 C532,253.4 527,252.4 522,250.8 C517,250.6 512,249.8 507.6,248.4 C505,247.6 503,246.6 502,245.2 C500.4,244 499.4,242.2 499.6,240.4Z" fill="none" stroke="#5a5a5a" stroke-width=".55" opacity=".8"/>
</svg>
</div>

</body></html>
